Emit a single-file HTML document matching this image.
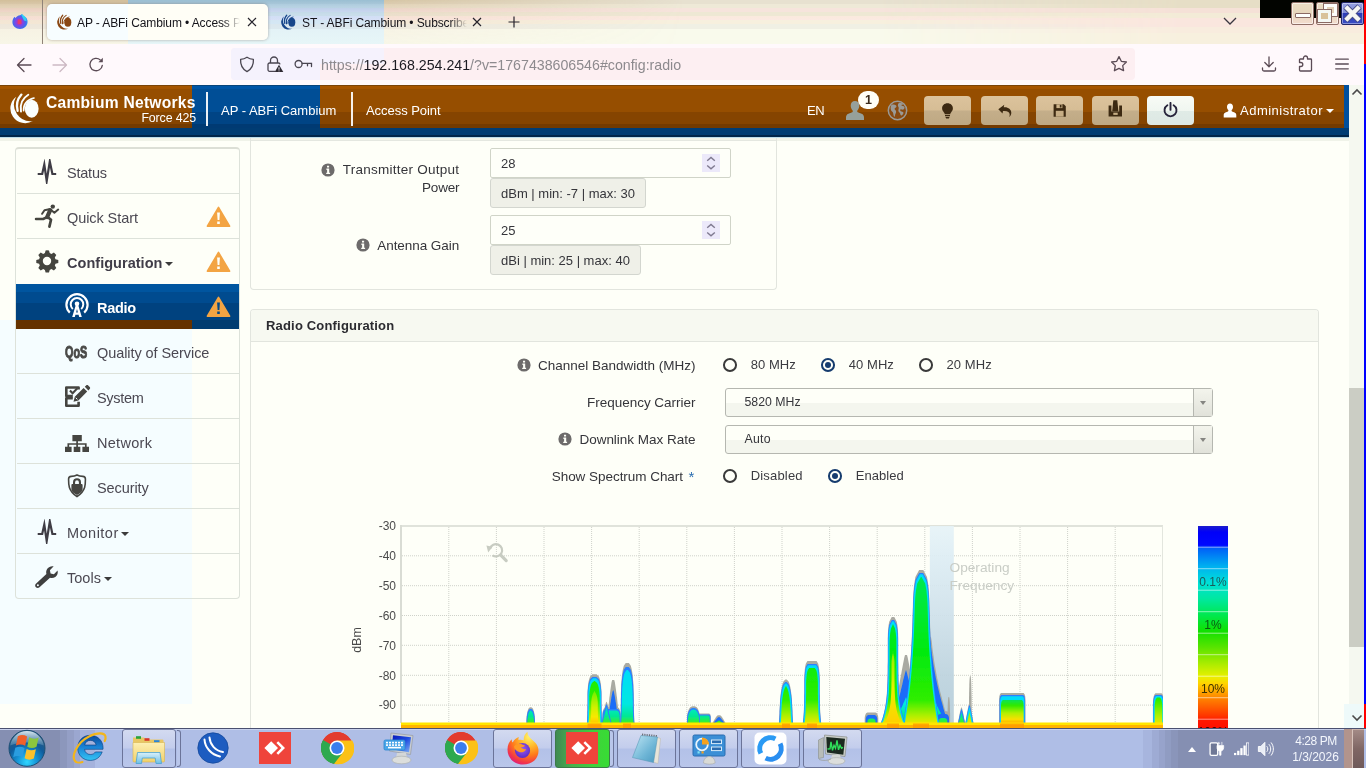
<!DOCTYPE html>
<html lang="en">
<head>
<meta charset="utf-8">
<title>AP - ABFi Cambium • Access Point</title>
<style>
*{box-sizing:border-box;margin:0;padding:0}
html,body{width:1366px;height:768px;overflow:hidden}
body{position:relative;background:#fefff8;font-family:"Liberation Sans",sans-serif;font-size:14px;color:#3b3b3b}
.abs{position:absolute}
.nw{white-space:nowrap}
/* ---------- browser chrome ---------- */
#tabbar{position:absolute;left:0;top:0;width:1366px;height:44px;background:linear-gradient(to bottom,#e7e1d0 0,#e7e1d0 4px,#eee9d7 4px,#eee9d7 8px,#f6e4dc 8px,#f6e4dc 12px,#eee8d4 12px,#eee8d4 16px,#faeadd 16px,#fbe9e2 20px,#f7f0de 20px,#f7f0de 24px,#f0f0e4 24px,#f0f0e4 29px,#f9faec 29px,#f9faec 44px)}
#tabbarL{position:absolute;left:0;top:0;width:128px;height:44px;background:linear-gradient(to bottom,rgba(185,150,90,.46) 0,rgba(195,150,100,.3) 6px,rgba(215,160,140,.16) 14px,rgba(225,170,150,.1) 28px,rgba(225,180,150,.06) 44px)}
#tabbarB{position:absolute;left:128px;top:0;width:256px;height:44px;background:linear-gradient(to bottom,rgba(90,150,185,.46) 0,rgba(100,150,195,.3) 6px,rgba(140,160,215,.16) 14px,rgba(150,170,225,.1) 28px,rgba(150,180,225,.06) 44px),linear-gradient(to bottom,#d0e1e7 0,#d0e1e7 4px,#d7e9ee 4px,#d7e9ee 8px,#dce4f6 8px,#dce4f6 12px,#d4e8ee 12px,#d4e8ee 16px,#ddeafa 16px,#e2e9fb 20px,#def0f7 20px,#def0f7 24px,#e4f0f0 24px,#e4f0f0 29px,#ecfaf9 29px,#ecfaf9 44px)}
#tabbarR{position:absolute;left:384px;top:0;width:300px;height:44px;background:linear-gradient(to bottom,rgba(185,150,90,.46) 0,rgba(195,150,100,.3) 6px,rgba(215,160,140,.16) 14px,rgba(225,170,150,.1) 28px,rgba(225,180,150,.06) 44px);-webkit-mask-image:linear-gradient(to right,rgba(0,0,0,.8),transparent);mask-image:linear-gradient(to right,rgba(0,0,0,.8),transparent)}
#tabbarRR{position:absolute;left:880px;top:0;width:486px;height:44px;background:linear-gradient(to bottom,#e6dec6 0,#e6dec6 8px,#f5e1d7 8px,#f5e1d7 13px,#f3ebd7 13px,#f3ebd7 18px,#fae6de 18px,#fae6de 27px,#f8ecde 27px,#f8ecde 33px,#f7f0de 33px,#f7f0de 44px);-webkit-mask-image:linear-gradient(to right,transparent 0,#000 300px);mask-image:linear-gradient(to right,transparent 0,#000 300px)}
#toolbar{position:absolute;left:0;top:44px;width:1366px;height:41px;background:#fff9fc}
#urlbar{position:absolute;left:231px;top:48px;width:904px;height:32px;border-radius:4px;background:#fdeff2;overflow:hidden}
.tab{position:absolute;top:4px;height:36px;border-radius:5px}
.tabtxt{position:absolute;top:5px;height:36px;line-height:36px;font-size:12px;color:#15141a;white-space:nowrap;overflow:hidden}
/* ---------- cambium header ---------- */
#hdr{position:absolute;left:0;top:85px;width:1349px;height:43px;background:linear-gradient(to bottom,#7a4408 0,#7a4408 1px,#a85700 1px,#a35400 4px,#964e00 4px,#964e00 27px,#854400 27px,#854400 39px,#733a00 39px,#733a00 43px);color:#fff}
#hdrB{position:absolute;left:192px;top:85px;width:128px;height:43px;background:linear-gradient(to bottom,#08447a 0,#08447a 1px,#0057a8 1px,#0054a3 4px,#004e96 4px,#004e96 27px,#004485 27px,#004485 39px,#003a73 39px,#003a73 43px)}
#hdrR{position:absolute;left:1344px;top:85px;width:5px;height:43px;background:#004f9c}
#stripe{position:absolute;left:0;top:128px;width:1349px;height:8.500px;background:linear-gradient(to bottom,#003c73 0,#003c73 7.500px,#00254a 7.500px,#00254a 8.500px)}
#stripeSh{position:absolute;left:0;top:136.500px;width:1349px;height:4px;background:linear-gradient(to bottom,#bcdcea 0,#bcdcea 1px,#f0f3e9 1px,#f0f3e9 4px)}
.hbtn{position:absolute;top:96px;width:47px;height:28.500px;border-radius:4px;background:linear-gradient(to bottom,#dcc39c 0,#d6bd95 48%,#c4ae8a 52%,#bea883 100%)}
/* ---------- sidebar ---------- */
#tintL{position:absolute;left:0;top:320px;width:192px;height:384px;background:#f5fdff}
#side{position:absolute;left:15px;top:147px;width:225px;height:452px;border:1px solid #dde2da;border-top:2px solid #dcdfd6;border-radius:4px}
.mi{position:absolute;left:0;width:222px;height:45px;border-top:1px solid #dde2da;line-height:44px;font-size:15px;color:#454545;white-space:nowrap}
.mi span{position:absolute;top:0}
/* ---------- panels ---------- */
.panel{position:absolute;border:1px solid #e2e5de;border-radius:3px}
.lbl{position:absolute;text-align:right;white-space:nowrap;font-size:13.500px;color:#35353a;line-height:18px}
.inp{position:absolute;left:490px;width:241px;height:30px;border:1px solid #d0d4c8;border-radius:2px;background:#fefff9}
.inp span{position:absolute;left:10px;top:1px;line-height:28px;font-size:13px;color:#35353a}
.hint{position:absolute;left:490px;height:30px;border:1px solid #d3d6cf;border-radius:3px;background:#eff0e8;font-size:13px;line-height:30px;color:#35353a;padding:0 0 0 10px;white-space:nowrap}
.sel{position:absolute;left:725px;width:488px;height:29.400px;border:1px solid #b5b7b0;border-radius:3px;background:linear-gradient(to bottom,#fefff8 0,#fefff8 50%,#f4f6ee 51%,#f4f6ee 100%)}
.sel span{position:absolute;left:18.500px;top:0;line-height:26px;font-size:12.300px;color:#35353a}
.sel i{position:absolute;right:0;top:0;width:19px;height:27px;border-left:1px solid #b5b7b0;background:linear-gradient(to bottom,#f3f4ec 0,#e1e2da 100%)}
.rad{position:absolute;width:14.400px;height:14px;border-radius:50%;border:2px solid #3a3a3a;background:#fefff8}
.rad.on{border-color:#163c6e}
.rad.on:after{content:"";position:absolute;left:1.900px;top:1.700px;width:6.600px;height:6.600px;border-radius:50%;background:#163c6e}
.rl{position:absolute;font-size:13px;line-height:18px;color:#3b3b40;white-space:nowrap}
/* ---------- taskbar ---------- */
#task{position:absolute;left:0;top:728px;width:1366px;height:40px;background:#afbee6;border-top:1px solid #4a5070}
.tbtn{position:absolute;top:729px;width:59px;height:39px;border:1px solid #6b7499;border-radius:3px;background:linear-gradient(to bottom,#d3daf0 0,#c3cdec 48%,#b3c1e8 52%,#b9c6ea 100%)}
</style>
</head>
<body>
<div id="wrap" style="position:absolute;left:0;top:0;width:1366px;height:768px;will-change:transform">
<!-- TABBAR -->
<div id="tabbar"></div><div id="tabbarL"></div><div id="tabbarB"></div><div id="tabbarR"></div><div id="tabbarRR"></div>
<!-- firefox view icon -->
<svg class="abs" style="left:11px;top:13px" width="18" height="18" viewBox="0 0 18 18"><defs><radialGradient id="ffv" cx="45%" cy="55%" r="60%"><stop offset="0" stop-color="#e0307a"/><stop offset=".35" stop-color="#8a40e0"/><stop offset=".75" stop-color="#3a6cf0"/><stop offset="1" stop-color="#35b0f5"/></radialGradient></defs><path d="M9 2.2c1-.2 1.600-1.400 2.400-1.200 0 1.200.8 1.800 1.800 2.200 2.200 1 3.600 3.200 3.400 5.800-.2 3.900-3.500 7-7.600 7S1.400 12.900 1.400 9c0-2.200.9-4 2.300-5.200.2.700.5 1 1 1.300.6-1.700 2.300-2.700 4.300-2.900z" fill="url(#ffv)"/><path d="M10 1.200c1.800.4 3.200 1.200 4.200 2.600 1 1.300 1.500 2.900 1.300 4.400l-2.500-.7-1.500-3z" fill="#2fd8f4" opacity=".9"/><rect x="6.800" y="6.500" width="3.600" height="4.600" fill="#e83a6a" opacity=".9"/></svg>
<div class="abs" style="left:42px;top:0;width:1px;height:44px;background:#8f8378"></div>
<!-- active tab -->
<div class="tab" style="left:47px;width:221px;background:linear-gradient(to right,#f7fdff 0,#f7fdff 81px,#fffef6 81px,#fffef6 100%);box-shadow:0 0 3px rgba(90,70,60,.45)"></div>
<svg class="abs" style="left:55.5px;top:13.5px" width="17" height="17" viewBox="0 0 34 34"><path d="M8.100 4.700A14.800 14.800 0 0 0 24.840 29.050A16.500 16.500 0 0 1 8.100 4.700z" fill="#8a4713"/><g fill="none" stroke="#8a4713" stroke-linecap="round"><path d="M13.400 2.600Q7.200 9.500 9.600 18.800" stroke-width="2.600"/><path d="M20.300 2.800Q11 8.500 13 19.600" stroke-width="2.200"/><path d="M26 6Q15 8.800 15.600 18.800" stroke-width="1.800"/></g><ellipse cx="23.700" cy="16.700" rx="6.900" ry="9" fill="#8a4713"/></svg>
<div class="tabtxt" style="left:77px;width:164px;letter-spacing:-.1px;-webkit-mask-image:linear-gradient(to right,#000 146px,transparent 163px);mask-image:linear-gradient(to right,#000 146px,transparent 163px)">AP - ABFi Cambium • Access Point</div>
<svg class="abs" style="left:247px;top:17px" width="10" height="10" viewBox="0 0 10 10"><path d="M1 1l8 8M9 1l-8 8" stroke="#26242c" stroke-width="1.200" fill="none"/></svg>
<!-- second tab -->
<svg class="abs" style="left:279.5px;top:13.5px" width="17" height="17" viewBox="0 0 34 34"><path d="M8.100 4.700A14.800 14.800 0 0 0 24.840 29.050A16.500 16.500 0 0 1 8.100 4.700z" fill="#17468a"/><g fill="none" stroke="#17468a" stroke-linecap="round"><path d="M13.400 2.600Q7.200 9.500 9.600 18.800" stroke-width="2.600"/><path d="M20.300 2.800Q11 8.500 13 19.600" stroke-width="2.200"/><path d="M26 6Q15 8.800 15.600 18.800" stroke-width="1.800"/></g><ellipse cx="23.700" cy="16.700" rx="6.900" ry="9" fill="#17468a"/></svg>
<div class="tabtxt" style="left:302px;width:166px;letter-spacing:-.1px;-webkit-mask-image:linear-gradient(to right,#000 148px,transparent 165px);mask-image:linear-gradient(to right,#000 148px,transparent 165px)">ST - ABFi Cambium • Subscriber Module</div>
<svg class="abs" style="left:472px;top:17px" width="10" height="10" viewBox="0 0 10 10"><path d="M1 1l8 8M9 1l-8 8" stroke="#26242c" stroke-width="1.200" fill="none"/></svg>
<svg class="abs" style="left:508px;top:16px" width="12" height="12" viewBox="0 0 12 12"><path d="M6 .5v11M.5 6h11" stroke="#26242c" stroke-width="1.200" fill="none"/></svg>
<svg class="abs" style="left:1223px;top:17px" width="14" height="8" viewBox="0 0 14 8"><path d="M1 1l6 6 6-6" stroke="#3a3640" stroke-width="1.300" fill="none"/></svg>
<!-- window buttons -->
<div class="abs" style="left:1260px;top:0;width:104px;height:18px;background:#020400"></div>
<div class="abs" style="left:1291px;top:2px;width:23px;height:23px;border:1px solid #8f6e66;border-radius:2px;background:linear-gradient(to bottom,#eadcc4 0,#e6d6bc 50%,#f3dccf 100%);box-shadow:inset 0 0 0 1px rgba(255,255,255,.55)"><div class="abs" style="left:2.500px;top:9.700px;width:16px;height:5.600px;background:#fdfffd;border:1px solid #8a6a64;border-radius:1px"></div></div>
<div class="abs" style="left:1316px;top:2px;width:23px;height:23px;border:1px solid #8f6e66;border-radius:2px;background:linear-gradient(to bottom,#eadcc4 0,#e6d6bc 50%,#f3dccf 100%);box-shadow:inset 0 0 0 1px rgba(255,255,255,.55)"><div class="abs" style="left:7px;top:1px;width:13px;height:12px;border:3px solid #fdfdfb;outline:1px solid #8a6a64;background:#e4d2b8"></div><div class="abs" style="left:1px;top:7px;width:13px;height:12px;border:3px solid #f4f8f4;outline:1px solid #8a6a64;background:#d9c29a"></div></div>
<div class="abs" style="left:1341px;top:2px;width:23px;height:23px;border:1px solid #22266a;border-radius:2px;background:linear-gradient(to bottom,#939ee0 0,#8490dc 46%,#2c3cb8 50%,#3a4cc4 100%);box-shadow:inset 0 0 0 1px rgba(255,255,255,.4)"><svg class="abs" style="left:1px;top:1px" width="19" height="19" viewBox="0 0 19 19"><path d="M2.500 2.500l14 14M16.500 2.500l-14 14" stroke="#4a4f86" stroke-width="6.200" fill="none"/><path d="M2.800 2.800l13.400 13.400M16.200 2.800L2.800 16.200" stroke="#f6f6f4" stroke-width="4.400" fill="none"/></svg></div>
<!-- TOOLBAR -->
<div id="toolbar"></div>
<div id="urlbar"><div class="abs" style="left:0;top:0;width:153px;height:16px;background:#f5f2fd"></div><div class="abs" style="left:0;top:16px;width:89px;height:16px;background:#f5f2fd"></div></div>
<svg class="abs" style="left:16px;top:57px" width="16" height="16" viewBox="0 0 16 16"><path d="M15 8H1.800M8 1.500L1.500 8 8 14.500" stroke="#5b4b55" stroke-width="1.300" fill="none" stroke-linecap="round" stroke-linejoin="round"/></svg>
<svg class="abs" style="left:52px;top:57px" width="16" height="16" viewBox="0 0 16 16"><path d="M1 8h13.200M8 1.500L14.500 8 8 14.500" stroke="#cdb9c3" stroke-width="1.300" fill="none" stroke-linecap="round" stroke-linejoin="round"/></svg>
<svg class="abs" style="left:88px;top:56px" width="17" height="17" viewBox="0 0 17 17"><path d="M14.300 9.300a6.200 6.200 0 1 1-2-5.400" stroke="#5b4b55" stroke-width="1.300" fill="none" stroke-linecap="round"/><path d="M14.800 1.800v4.400h-4.400z" fill="#5b4b55"/></svg>
<svg class="abs" style="left:239px;top:56px" width="16" height="17" viewBox="0 0 16 17"><path d="M8 1.200C6 2.600 3.800 3.200 1.600 3.300c-.3 5 1.400 9.700 6.400 12.300 5-2.600 6.700-7.300 6.400-12.300C12.200 3.200 10 2.600 8 1.200z" stroke="#4a4651" stroke-width="1.300" fill="none" stroke-linejoin="round"/></svg>
<svg class="abs" style="left:266px;top:55px" width="18" height="18" viewBox="0 0 18 18"><path d="M4.500 8V5.500a3.500 3.500 0 0 1 7 0V8" stroke="#4a4651" stroke-width="1.300" fill="none"/><path d="M9 16.300H3.500a1.500 1.500 0 0 1-1.500-1.500V9.500A1.500 1.500 0 0 1 3.500 8h9a1.500 1.500 0 0 1 1.500 1.300" stroke="#4a4651" stroke-width="1.300" fill="none"/><path d="M13 9.800l4.300 7.200H8.700z" fill="#2e2b33"/><path d="M13 12.300v2.400M13 15.500v.8" stroke="#f5f2fd" stroke-width="1"/></svg>
<svg class="abs" style="left:294px;top:58px" width="19" height="12" viewBox="0 0 19 12"><circle cx="4.600" cy="6" r="3.500" stroke="#4a4651" stroke-width="1.300" fill="none"/><path d="M8.200 5.400h9.300v3.200M13.500 5.400v2.400" stroke="#4a4651" stroke-width="1.300" fill="none" stroke-linecap="round"/></svg>
<div class="abs nw" style="left:321px;top:49px;height:32px;line-height:33px;font-size:14.200px;color:#8d8a8e;letter-spacing:0">https://<span style="color:#1c1b22">192.168.254.241</span>/?v=1767438606546#config:radio</div>
<svg class="abs" style="left:1110px;top:55px" width="18" height="18" viewBox="0 0 18 18"><path d="M9 1.600l2.300 4.700 5.100.7-3.700 3.600.9 5.100L9 13.300l-4.600 2.400.9-5.100L1.600 7l5.100-.7z" stroke="#5b4b55" stroke-width="1.300" fill="none" stroke-linejoin="round"/></svg>
<svg class="abs" style="left:1261px;top:56px" width="16" height="16" viewBox="0 0 16 16"><path d="M8 1v9.500M3.800 6.500L8 10.700l4.200-4.200M1.500 12v1.500a1.500 1.500 0 0 0 1.500 1.500h10a1.500 1.500 0 0 0 1.500-1.500V12" stroke="#5b4b55" stroke-width="1.300" fill="none" stroke-linecap="round" stroke-linejoin="round"/></svg>
<svg class="abs" style="left:1298px;top:55px" width="16" height="17" viewBox="0 0 16 17"><path d="M5.500 4V3a2 2 0 0 1 4 0v1h3.200a.8.800 0 0 1 .8.800V15a1 1 0 0 1-1 1H2.500a1 1 0 0 1-1-1v-3.500h1.300a2 2 0 0 0 0-4H1.500V4.800a.8.800 0 0 1 .8-.8z" stroke="#5b4b55" stroke-width="1.300" fill="none" stroke-linejoin="round"/></svg>
<svg class="abs" style="left:1335px;top:58px" width="14" height="12" viewBox="0 0 14 12"><path d="M.7 1.200h12.600M.7 6h12.600M.7 10.800h12.600" stroke="#5b4b55" stroke-width="1.300" fill="none" stroke-linecap="round"/></svg>
<!-- HEADER -->
<div id="hdr"></div><div id="hdrB"></div><div id="hdrR"></div>
<div id="stripe"></div><div id="stripeSh"></div>
<svg class="abs" style="left:8px;top:92px" width="34" height="34" viewBox="0 0 34 34"><path d="M8.100 4.700A14.800 14.800 0 0 0 24.840 29.050A16.500 16.500 0 0 1 8.100 4.700z" fill="#fafffe"/><g fill="none" stroke="#fafffe" stroke-linecap="round"><path d="M13.400 2.600Q7.200 9.500 9.600 18.800" stroke-width="2.300"/><path d="M20.300 2.800Q11 8.500 13 19.600" stroke-width="1.900"/><path d="M26 6Q15 8.800 15.600 18.800" stroke-width="1.600"/></g><ellipse cx="23.700" cy="16.700" rx="6.900" ry="9" fill="#fafffe"/></svg>
<div class="abs nw" style="left:46px;top:92px;height:22px;line-height:22px;font-size:15.600px;font-weight:bold;color:#fff;letter-spacing:.26px">Cambium Networks</div>
<div class="abs nw" style="left:100px;width:96px;text-align:right;top:109px;height:18px;line-height:18px;font-size:12.400px;letter-spacing:-.13px;color:#fff">Force 425</div>
<div class="abs" style="left:206px;top:92px;width:2px;height:34px;background:#fff;opacity:.92"></div>
<div class="abs nw" style="left:221px;top:101px;height:20px;line-height:20px;font-size:13px;color:#fff">AP - ABFi Cambium</div>
<div class="abs" style="left:351px;top:92px;width:2px;height:34px;background:#fff;opacity:.92"></div>
<div class="abs nw" style="left:366px;top:101px;height:20px;line-height:20px;font-size:13px;letter-spacing:-.05px;color:#fff">Access Point</div>
<div class="abs nw" style="left:807px;top:101px;height:20px;line-height:20px;font-size:13px;letter-spacing:-.5px;color:#fff">EN</div>
<svg class="abs" style="left:845px;top:100px" width="20" height="21" viewBox="0 0 20 21"><path d="M10 1c2.700 0 4.300 2 4.300 4.800 0 1.800-.8 3.600-1.900 4.600-.3.300-.3 1.500.4 1.800l3.800 1.600c1.600.7 2.400 1.800 2.400 3.700V20H1v-2.500c0-1.900.8-3 2.400-3.700l3.800-1.600c.7-.3.700-1.500.4-1.800-1.100-1-1.900-2.800-1.900-4.600C5.700 3 7.300 1 10 1z" fill="#96a09b"/></svg>
<div class="abs" style="left:858px;top:91px;width:21px;height:18px;border-radius:9px;background:#fffef6"></div>
<div class="abs nw" style="left:858px;width:21px;text-align:center;top:91px;height:18px;line-height:18px;font-size:12.500px;font-weight:bold;color:#3a2a1a">1</div>
<svg class="abs" style="left:887px;top:100px" width="21" height="21" viewBox="0 0 21 21"><circle cx="10.500" cy="10.500" r="9.200" fill="#8a4a10" stroke="#9a9a96" stroke-width="1.500"/><path d="M4.500 4.800c1.800-.6 3.600-.4 4.600.6.800 1 .2 2-1 2.600-.8.500-.6 1.500.2 2 1.200.8 1 2.400.2 3.800-.5.900-.5 2.500-1.100 3.200-.8-.8-1-2.600-1.200-3.800-.2-1.400-1.600-1.800-2.200-3-.6-1.500-.4-4 .5-5.400zM12.400 2.800c1.400-.2 3 .4 4.200 1.400-.8.400-1.800.3-2.300 1 .8.700 2.500.5 3.100 1.500.5 1-.2 2.400-1.200 2.900-.9.400-1.700-.5-2.500-.3-.9.300-.6 1.600.1 2 .9.500 2.200.2 2.600 1.200.3.900-.6 2.200-1.600 2.900-.9.600-1.500-.6-1.600-1.600-.1-1.100-1.300-1.500-1.700-2.500-.4-1.200.4-2.300.2-3.500-.1-1-1-1.600-.8-2.700.1-1 .6-2 1.500-2.300z" fill="#9a9a96"/></svg>
<div class="hbtn" style="left:924px"></div>
<svg class="abs" style="left:941px;top:103px" width="13" height="16" viewBox="0 0 13 16"><path d="M6.500 .3C3.300 .3 1.100 2.500 1.100 5.300c0 1.700.8 2.800 1.700 3.900.6.700.9 1.300 1 2.100h5.400c.1-.8.400-1.400 1-2.100.9-1.100 1.700-2.200 1.700-3.900C11.900 2.500 9.700 .3 6.500 .3zM4 12.100h5v1.200H4zM4.400 13.900h4.200l-.8 1.500H5.200z" fill="#3d2a12"/></svg>
<div class="hbtn" style="left:981px"></div>
<svg class="abs" style="left:998px;top:104px" width="14" height="14" viewBox="0 0 14 14"><path d="M.3 5.200L6.300 .8l-.6 2.500c4.300-.5 7.600 2 7.600 5.500 0 1.800-.8 3.300-2.200 4.300.5-.9.600-1.700.6-2.500 0-2.500-2.500-4-6.700-3.500l-.5 2.300z" fill="#3d2a12"/></svg>
<div class="hbtn" style="left:1036px"></div>
<svg class="abs" style="left:1053px;top:104px" width="14" height="13" viewBox="0 0 14 13"><path d="M.6 .3h10.200l2 2v10.400H.6z" fill="#3d2a12"/><rect x="3.400" y=".3" width="6" height="3.800" fill="#cdb48a"/><rect x="6.800" y=".9" width="1.700" height="2.600" fill="#3d2a12"/><rect x="2.800" y="6.800" width="7.800" height="5.900" fill="#c7ae85"/></svg>
<div class="hbtn" style="left:1092px"></div>
<svg class="abs" style="left:1108px;top:100px" width="15" height="17" viewBox="0 0 15 17"><path d="M5.300 .3h4l1.100 11.200H4.200z" fill="#3d2a12"/><path d="M.6 5.600h2.800v5.900h7.800V5.600H14v11H.6z" fill="#3d2a12"/><path d="M5.300 12.700h4.400v2.200H5.300z" fill="#c7ae85"/></svg>
<div class="hbtn" style="left:1147px;background:linear-gradient(to bottom,#f8fbf6 0,#f0f6f0 50%,#e0ebe6 52%,#dde8e4 100%)"></div>
<svg class="abs" style="left:1162px;top:102px" width="17" height="16" viewBox="0 0 17 16"><path d="M5.400 3.200a6 6 0 1 0 6.200 0" stroke="#26233a" stroke-width="1.900" fill="none" stroke-linecap="round"/><path d="M8.500 .9v7" stroke="#26233a" stroke-width="1.900" stroke-linecap="round"/></svg>
<svg class="abs" style="left:1223px;top:103px" width="14" height="15" viewBox="0 0 14 15"><path d="M7 .5c1.900 0 3 1.400 3 3.400 0 1.300-.6 2.500-1.300 3.200-.2.200-.2 1 .3 1.300l2.600 1.100c1.100.5 1.700 1.300 1.700 2.600V14.500H.7v-2.400c0-1.300.6-2.100 1.700-2.600L5 8.400c.5-.3.500-1.100.3-1.300C4.600 6.400 4 5.200 4 3.900 4 1.900 5.100.5 7 .5z" fill="#fff"/></svg>
<div class="abs nw" style="left:1240px;top:101px;height:20px;line-height:20px;font-size:13px;letter-spacing:.49px;color:#fff">Administrator</div>
<div class="abs" style="left:1326px;top:109px;width:0;height:0;border-left:4px solid transparent;border-right:4px solid transparent;border-top:4px solid #fff"></div>
<!-- PAGE -->
<div id="tintL"></div>
<div id="side"></div>
<div class="abs" style="left:17px;top:193px;width:222px;height:1px;background:#dde2da"></div>
<div class="abs" style="left:17px;top:238px;width:222px;height:1px;background:#dde2da"></div>
<div class="abs" style="left:17px;top:373px;width:222px;height:1px;background:#dde2da"></div>
<div class="abs" style="left:17px;top:418px;width:222px;height:1px;background:#dde2da"></div>
<div class="abs" style="left:17px;top:463px;width:222px;height:1px;background:#dde2da"></div>
<div class="abs" style="left:17px;top:508px;width:222px;height:1px;background:#dde2da"></div>
<div class="abs" style="left:17px;top:553px;width:222px;height:1px;background:#dde2da"></div>
<svg class="abs" style="left:37px;top:159px" width="20" height="25" viewBox="0 0 20 25"><path d="M.7 15H5.200L7.300 5.500 9.700 22 12.800 2.500 15.400 15H19.200" stroke="#3f3d45" stroke-width="2.200" fill="none" stroke-linejoin="miter" stroke-miterlimit="10"/></svg>
<div class="abs nw" style="left:67px;top:162px;height:22px;line-height:22px;font-size:14.500px;letter-spacing:-0.22px;color:#4b4852">Status</div>
<svg class="abs" style="left:34px;top:203px" width="26" height="26" viewBox="0 0 26 26"><circle cx="18.800" cy="3.600" r="2.200" fill="#45453f"/><g stroke="#45453f" fill="none" stroke-linecap="round" stroke-linejoin="round"><path d="M16.200 7.200L13.200 14" stroke-width="4.200"/><path d="M16.800 6.800l3.600 3 3.800-3.200" stroke-width="2"/><path d="M15.200 6.200l-4.700 1-2.400 3.600" stroke-width="2"/><path d="M13 14.200l-3.800 1.800H2" stroke-width="2.500"/><path d="M13.600 14l3.400 2.800-1.600 6.800" stroke-width="2.700"/></g></svg>
<div class="abs nw" style="left:67px;top:207px;height:22px;line-height:22px;font-size:14.500px;letter-spacing:-0.08px;color:#4b4852">Quick Start</div>
<svg class="abs" style="left:206px;top:206px" width="25" height="22" viewBox="0 0 25 22"><path d="M12.500 1.400L23.600 20.200H1.400z" fill="#f3a443" stroke="#f3a443" stroke-width="1.600" stroke-linejoin="round"/><path d="M11.100 6.400h2.800l-.5 7.600h-1.800zM11.200 15.400h2.600v2.600h-2.600z" fill="#fefff8"/></svg>
<svg class="abs" style="left:35px;top:249px" width="24" height="24" viewBox="0 0 24 24"><path d="M12 1.200l2 .2.700 2.700 1.700.8 2.500-1.400 2.400 2.600-1.500 2.400.7 1.700 2.800.7v3.200l-2.800.7-.7 1.700 1.500 2.400-2.400 2.600-2.500-1.400-1.700.8-.7 2.700h-3.400l-.7-2.700-1.700-.8-2.500 1.400-2.400-2.600 1.500-2.400-.7-1.700-2.800-.7v-3.200l2.800-.7.700-1.700-1.500-2.400 2.400-2.600 2.500 1.400 1.700-.8.700-2.700zM12 7.800a4.200 4.200 0 1 0 0 8.400 4.200 4.200 0 0 0 0-8.400z" fill="#45453f" fill-rule="evenodd"/></svg>
<div class="abs nw" style="left:67px;top:252px;height:22px;line-height:22px;font-size:14.500px;letter-spacing:0.03px;font-weight:bold;color:#403d48">Configuration</div>
<div class="abs" style="left:165px;top:262px;width:0;height:0;border-left:4px solid transparent;border-right:4px solid transparent;border-top:4px solid #3b3b3b"></div>
<svg class="abs" style="left:206px;top:251px" width="25" height="22" viewBox="0 0 25 22"><path d="M12.500 1.400L23.600 20.200H1.400z" fill="#f3a443" stroke="#f3a443" stroke-width="1.600" stroke-linejoin="round"/><path d="M11.100 6.400h2.800l-.5 7.600h-1.800zM11.200 15.400h2.600v2.600h-2.600z" fill="#fefff8"/></svg>
<div class="abs" style="left:16px;top:284px;width:223px;height:37px;background:linear-gradient(to bottom,#00559f 0,#00559f 8px,#004b8f 8px,#004b8f 19px,#00427f 19px,#00427f 37px)"></div>
<div class="abs" style="left:16px;top:320px;width:176px;height:9px;background:#653200"></div>
<div class="abs" style="left:192px;top:320px;width:47px;height:9px;background:#003c70"></div>
<svg class="abs" style="left:64px;top:293px" width="26" height="25" viewBox="0 0 26 25"><g fill="none" stroke="#fff"><path d="M5.800 19.600A10.600 10.600 0 1 1 20.200 19.600" stroke-width="2.200"/><path d="M8.800 16A6.300 6.300 0 1 1 17.200 16" stroke-width="2"/></g><circle cx="13" cy="10.800" r="2.300" fill="#fff"/><path d="M11.800 12h2.400l3.600 12h-2.600l-.6-2.200h-3.200l-.6 2.200H8.200zM13 16l-.9 3.400h1.800z" fill="#fff" fill-rule="evenodd"/></svg>
<div class="abs nw" style="left:97px;top:297px;height:22px;line-height:22px;font-size:14.500px;letter-spacing:-0.28px;font-weight:bold;color:#fff">Radio</div>
<svg class="abs" style="left:206px;top:296px" width="25" height="22" viewBox="0 0 25 22"><path d="M12.500 1.400L23.600 20.200H1.400z" fill="#f3a443" stroke="#f3a443" stroke-width="1.600" stroke-linejoin="round"/><path d="M11.100 6.400h2.800l-.5 7.600h-1.800zM11.200 15.400h2.600v2.600h-2.600z" fill="#00488a"/></svg>
<div class="abs nw" style="left:65px;top:341px;height:22px;line-height:22px;font-size:16.500px;font-weight:bold;color:#4a4a48;letter-spacing:0;transform:scaleX(.655);transform-origin:0 50%;-webkit-text-stroke:1px #4a4a48">QoS</div>
<div class="abs nw" style="left:97px;top:342px;height:22px;line-height:22px;font-size:14.500px;letter-spacing:-0.07px;color:#4b4852">Quality of Service</div>
<svg class="abs" style="left:64px;top:385px" width="27" height="24" viewBox="0 0 27 24"><g fill="none" stroke="#454541" stroke-width="2.600" stroke-linejoin="round"><path d="M14.600 4.500V2.500H2.300v8.600h6.500"/><path d="M8.800 13.200H2.300v7.600h12.300v-4"/></g><path d="M5.200 6.200l1.500-1.400 1.900 1.900 4-4.200 1.500 1.400-5.500 5.800z" fill="#454541"/><path d="M20.800 1.800l3.600 3.600 1.300-1.300c.6-.6.600-1.500 0-2.100L24.200.5c-.6-.6-1.500-.6-2.100 0zM19.600 3L10.800 11.800l-1.300 4.900 4.900-1.300L23.200 6.600z" fill="#454541"/><path d="M11.800 12.800l1.600 1.600" stroke="#f5fdff" stroke-width="1"/></svg>
<div class="abs nw" style="left:97px;top:387px;height:22px;line-height:22px;font-size:14.500px;letter-spacing:-0.32px;color:#4b4852">System</div>
<svg class="abs" style="left:64px;top:434px" width="26" height="19" viewBox="0 0 26 19"><path d="M8.400 1h9.400v6.200H8.400zM1 12.800h6.600v5.200H1zM9.700 12.800h6.600v5.200H9.700zM18.400 12.800H25v5.200h-6.600z" fill="#454541"/><path d="M13.100 7v6M4.300 13v-3h17.500v3" stroke="#454541" stroke-width="1.700" fill="none"/></svg>
<div class="abs nw" style="left:97px;top:432px;height:22px;line-height:22px;font-size:14.500px;letter-spacing:0.29px;color:#4b4852">Network</div>
<svg class="abs" style="left:67px;top:474px" width="20" height="24" viewBox="0 0 20 24"><path d="M10 1c1.800.9 3.800 1.300 5.800 1.400 1.500.1 2.600 1.200 2.600 2.700 0 2.800.1 5.600-.8 8.300-1.200 3.700-3.800 6.700-7.600 9.100-3.800-2.400-6.400-5.400-7.600-9.100-.9-2.700-.8-5.500-.8-8.300 0-1.500 1.100-2.600 2.600-2.700C6.200 2.300 8.200 1.900 10 1z" fill="#f5fdff" stroke="#454541" stroke-width="1.600"/><path d="M6 10V8.200a4 4 0 0 1 8 0V10h.7c.5 0 .9.400.9.900v4.600c0 2.200-2.700 4-5.600 5.600-2.900-1.600-5.600-3.400-5.600-5.600v-4.600c0-.5.400-.9.900-.9zm2.100 0h3.800V8.200a1.900 1.900 0 0 0-3.800 0z" fill="#454541" fill-rule="evenodd"/></svg>
<div class="abs nw" style="left:97px;top:477px;height:22px;line-height:22px;font-size:14.500px;letter-spacing:-0.08px;color:#4b4852">Security</div>
<svg class="abs" style="left:37px;top:519px" width="20" height="25" viewBox="0 0 20 25"><path d="M.7 15H5.200L7.300 5.500 9.700 22 12.800 2.500 15.400 15H19.200" stroke="#3f3d45" stroke-width="2.200" fill="none" stroke-linejoin="miter" stroke-miterlimit="10"/></svg>
<div class="abs nw" style="left:67px;top:522px;height:22px;line-height:22px;font-size:14.500px;letter-spacing:0.48px;color:#4b4852">Monitor</div>
<div class="abs" style="left:121px;top:532px;width:0;height:0;border-left:4px solid transparent;border-right:4px solid transparent;border-top:4px solid #3b3b3b"></div>
<svg class="abs" style="left:34px;top:565px" width="25" height="24" viewBox="0 0 25 24"><path d="M23.600 5.500c.6 2.600-.3 5-2.300 6.400-1.600 1.100-3.500 1.300-5.300.8L5.500 22.300c-1 1-2.600 1-3.600 0s-1-2.600 0-3.600L12.400 9c-.5-1.800-.2-3.700.9-5.300C14.800 1.700 17.200.8 19.700 1.300l-3.800 3.900.7 3.300 3.300.7z" fill="#3f3f3f"/><circle cx="3.900" cy="20.300" r="1" fill="#f5fdff"/></svg>
<div class="abs nw" style="left:67px;top:567px;height:22px;line-height:22px;font-size:14.500px;letter-spacing:0.03px;color:#4b4852">Tools</div>
<div class="abs" style="left:104px;top:577px;width:0;height:0;border-left:4px solid transparent;border-right:4px solid transparent;border-top:4px solid #3b3b3b"></div>
<!-- PANELS -->
<div class="abs" style="left:250px;top:138px;width:527px;height:152px;border:1px solid #e2e5de;border-top:none;border-radius:0 0 4px 4px"></div>
<div class="abs" style="left:251px;top:140px;width:525px;height:1px;background:#e4e7e0"></div>
<svg class="abs" style="left:321px;top:162.500px" width="14" height="14" viewBox="0 0 14 14"><circle cx="7" cy="7" r="6.600" fill="#6d6b6b"/><path d="M5.400 5.600h2.800v4.200h.9v1.300H5.200V9.800h.9V6.900h-.7zM6 2.700h2.100v1.900H6z" fill="#fefff8"/></svg>
<div class="lbl" style="left:299.200px;width:160px;top:161px;letter-spacing:.25px">Transmitter Output</div><div class="lbl" style="left:299.200px;width:160px;top:179px;letter-spacing:-.24px">Power</div>
<div class="inp" style="top:148px"><span>28</span></div><div class="abs" style="left:702px;top:154px;width:18px;height:18px;background:#ece9fa"><svg class="abs" style="left:0;top:0" width="18" height="18" viewBox="0 0 18 18"><path d="M5.200 6.800L9 3.400l3.800 3.400M5.200 11.400L9 14.800l3.800-3.400" stroke="#7f7a90" stroke-width="1.400" fill="none"/></svg></div>
<div class="hint" style="top:178px;width:156px">dBm | min: -7 | max: 30</div>
<svg class="abs" style="left:356px;top:238px" width="14" height="14" viewBox="0 0 14 14"><circle cx="7" cy="7" r="6.600" fill="#6d6b6b"/><path d="M5.400 5.600h2.800v4.200h.9v1.300H5.200V9.800h.9V6.900h-.7zM6 2.700h2.100v1.900H6z" fill="#fefff8"/></svg>
<div class="lbl" style="left:299.200px;width:160px;top:237px;letter-spacing:-.05px">Antenna Gain</div>
<div class="inp" style="top:215px"><span>25</span></div><div class="abs" style="left:702px;top:221px;width:18px;height:18px;background:#ece9fa"><svg class="abs" style="left:0;top:0" width="18" height="18" viewBox="0 0 18 18"><path d="M5.200 6.800L9 3.400l3.800 3.400M5.200 11.400L9 14.800l3.800-3.400" stroke="#7f7a90" stroke-width="1.400" fill="none"/></svg></div>
<div class="hint" style="top:245px;width:151px">dBi | min: 25 | max: 40</div>
<!-- radio configuration panel -->
<div class="abs" style="left:250px;top:309px;width:1069px;height:460px;border:1px solid #e2e5de;border-radius:4px 4px 0 0;border-bottom:none"></div>
<div class="abs" style="left:251px;top:310px;width:1067px;height:32px;background:#f7f9f1;border-bottom:1px solid #e2e5de;border-radius:3px 3px 0 0"></div>
<div class="abs nw" style="left:266px;top:316px;height:20px;line-height:20px;font-size:13px;letter-spacing:.18px;font-weight:bold;color:#2b2b30">Radio Configuration</div>
<svg class="abs" style="left:517px;top:358px" width="14" height="14" viewBox="0 0 14 14"><circle cx="7" cy="7" r="6.600" fill="#6d6b6b"/><path d="M5.400 5.600h2.800v4.200h.9v1.300H5.200V9.800h.9V6.900h-.7zM6 2.700h2.100v1.900H6z" fill="#fefff8"/></svg>
<div class="lbl" style="left:500.600px;width:195px;top:357px">Channel Bandwidth (MHz)</div>
<div class="rad" style="left:723px;top:358px"></div><div class="rl" style="left:750.700px;top:356px;letter-spacing:.05px">80 MHz</div>
<div class="rad on" style="left:821px;top:358px"></div><div class="rl" style="left:848.800px;top:356px;letter-spacing:.05px">40 MHz</div>
<div class="rad" style="left:919px;top:358px"></div><div class="rl" style="left:946.600px;top:356px;letter-spacing:.05px">20 MHz</div>
<div class="lbl" style="left:500.400px;width:195px;top:394px;letter-spacing:-.03px">Frequency Carrier</div>
<div class="sel" style="top:387.600px"><span>5820 MHz</span><i></i></div>
<div class="abs" style="left:1200px;top:400.500px;width:0;height:0;border-left:3px solid transparent;border-right:3px solid transparent;border-top:4.500px solid #858581"></div>
<svg class="abs" style="left:558px;top:432px" width="14" height="14" viewBox="0 0 14 14"><circle cx="7" cy="7" r="6.600" fill="#6d6b6b"/><path d="M5.400 5.600h2.800v4.200h.9v1.300H5.200V9.800h.9V6.900h-.7zM6 2.700h2.100v1.900H6z" fill="#fefff8"/></svg>
<div class="lbl" style="left:500.400px;width:195px;top:431px;letter-spacing:-.02px">Downlink Max Rate</div>
<div class="sel" style="top:424.600px"><span style="letter-spacing:.25px">Auto</span><i></i></div>
<div class="abs" style="left:1200px;top:437.500px;width:0;height:0;border-left:3px solid transparent;border-right:3px solid transparent;border-top:4.500px solid #858581"></div>
<div class="lbl" style="left:488px;width:195px;top:468px;letter-spacing:-.04px">Show Spectrum Chart</div><div class="abs nw" style="left:688.500px;top:468px;line-height:18px;font-size:15px;color:#2a6db0">*</div>
<div class="rad" style="left:723px;top:469px"></div><div class="rl" style="left:750.700px;top:467px;letter-spacing:.18px">Disabled</div>
<div class="rad on" style="left:828px;top:469px"></div><div class="rl" style="left:855.800px;top:467px;letter-spacing:.03px">Enabled</div>
<!-- CHART -->
<svg class="abs" style="left:340px;top:510px" width="900" height="218" viewBox="340 510 900 218" font-family="'Liberation Sans',sans-serif">
<defs><linearGradient id="gG" gradientUnits="userSpaceOnUse" x1="0" y1="560" x2="0" y2="723"><stop offset="0" stop-color="#00e860"/><stop offset=".55" stop-color="#00ea10"/><stop offset=".86" stop-color="#30ee00"/><stop offset=".95" stop-color="#a8f000"/><stop offset="1" stop-color="#e8e800"/></linearGradient><linearGradient id="gY" gradientUnits="userSpaceOnUse" x1="0" y1="660" x2="0" y2="723"><stop offset="0" stop-color="#30ec00"/><stop offset=".5" stop-color="#70ee00"/><stop offset=".75" stop-color="#d0f000"/><stop offset=".9" stop-color="#f8e800"/><stop offset="1" stop-color="#ffc800"/></linearGradient><linearGradient id="gY2" gradientUnits="userSpaceOnUse" x1="0" y1="635" x2="0" y2="723"><stop offset="0" stop-color="#38ec00"/><stop offset=".3" stop-color="#a0f000"/><stop offset=".6" stop-color="#e8f000"/><stop offset="1" stop-color="#ffd000"/></linearGradient><linearGradient id="gP" gradientUnits="userSpaceOnUse" x1="0" y1="698" x2="0" y2="723"><stop offset="0" stop-color="#00e070"/><stop offset=".3" stop-color="#30ea00"/><stop offset=".6" stop-color="#b0f000"/><stop offset=".85" stop-color="#f8e000"/><stop offset="1" stop-color="#ffb000"/></linearGradient><linearGradient id="gC" gradientUnits="userSpaceOnUse" x1="0" y1="660" x2="0" y2="723"><stop offset="0" stop-color="#00d8ff"/><stop offset=".7" stop-color="#00e8e0"/><stop offset=".9" stop-color="#00e890"/><stop offset="1" stop-color="#40f020"/></linearGradient><linearGradient id="gOp" x1="0" y1="0" x2="0" y2="1"><stop offset="0" stop-color="#e6f3f7"/><stop offset=".18" stop-color="#dcecf3"/><stop offset=".45" stop-color="#cfe1ea"/><stop offset=".75" stop-color="#bdd3de"/><stop offset="1" stop-color="#b4ccd8"/></linearGradient><filter id="bl" x="340" y="510" width="900" height="218" filterUnits="userSpaceOnUse"><feGaussianBlur stdDeviation=".55"/></filter><clipPath id="cp"><rect x="401" y="526" width="762" height="198"/></clipPath></defs>
<path d="M402 555.8H1163" stroke="#cfd2ca" stroke-width="1" stroke-dasharray="1 1" fill="none"/><path d="M402 585.7H1163" stroke="#cfd2ca" stroke-width="1" stroke-dasharray="1 1" fill="none"/><path d="M402 615.5H1163" stroke="#cfd2ca" stroke-width="1" stroke-dasharray="1 1" fill="none"/><path d="M402 645.3H1163" stroke="#cfd2ca" stroke-width="1" stroke-dasharray="1 1" fill="none"/><path d="M402 675.3H1163" stroke="#cfd2ca" stroke-width="1" stroke-dasharray="1 1" fill="none"/><path d="M402 705.1H1163" stroke="#cfd2ca" stroke-width="1" stroke-dasharray="1 1" fill="none"/><path d="M448.8 527V723" stroke="#cfd2ca" stroke-width="1" stroke-dasharray="1 1" fill="none"/><path d="M496.4 527V723" stroke="#cfd2ca" stroke-width="1" stroke-dasharray="1 1" fill="none"/><path d="M544.0 527V723" stroke="#cfd2ca" stroke-width="1" stroke-dasharray="1 1" fill="none"/><path d="M591.6 527V723" stroke="#cfd2ca" stroke-width="1" stroke-dasharray="1 1" fill="none"/><path d="M639.2 527V723" stroke="#cfd2ca" stroke-width="1" stroke-dasharray="1 1" fill="none"/><path d="M686.8 527V723" stroke="#cfd2ca" stroke-width="1" stroke-dasharray="1 1" fill="none"/><path d="M734.4 527V723" stroke="#cfd2ca" stroke-width="1" stroke-dasharray="1 1" fill="none"/><path d="M782.0 527V723" stroke="#cfd2ca" stroke-width="1" stroke-dasharray="1 1" fill="none"/><path d="M829.6 527V723" stroke="#cfd2ca" stroke-width="1" stroke-dasharray="1 1" fill="none"/><path d="M877.2 527V723" stroke="#cfd2ca" stroke-width="1" stroke-dasharray="1 1" fill="none"/><path d="M924.8 527V723" stroke="#cfd2ca" stroke-width="1" stroke-dasharray="1 1" fill="none"/><path d="M972.4 527V723" stroke="#cfd2ca" stroke-width="1" stroke-dasharray="1 1" fill="none"/><path d="M1020.0 527V723" stroke="#cfd2ca" stroke-width="1" stroke-dasharray="1 1" fill="none"/><path d="M1067.6 527V723" stroke="#cfd2ca" stroke-width="1" stroke-dasharray="1 1" fill="none"/><path d="M1115.2 527V723" stroke="#cfd2ca" stroke-width="1" stroke-dasharray="1 1" fill="none"/>
<path d="M401 526H1163" stroke="#e0e3db" stroke-width="2" fill="none"/><path d="M401 525V723" stroke="#d9dcd4" stroke-width="2" fill="none"/><path d="M1162.500 526V723" stroke="#e3e6de" stroke-width="1" fill="none"/>
<rect x="929.800" y="526" width="24" height="197" fill="url(#gOp)" opacity=".93"/>
<text x="949.500" y="571.500" font-size="13.700" fill="#c9cdc6">Operating</text><text x="949.500" y="589.500" font-size="13.700" fill="#c9cdc6">Frequency</text>
<g clip-path="url(#cp)">
<path d="M526.4 723.0 L526.4 722.3 L526.4 721.6 L526.4 720.9 L526.4 720.1 L526.4 719.4 L526.5 718.7 L526.5 718.0 L526.6 717.3 L526.6 716.6 L526.7 715.9 L526.8 715.2 L526.9 714.4 L527.0 713.7 L527.1 713.0 L527.3 712.3 L527.4 711.6 L527.6 710.9 L527.9 710.2 L528.1 709.5 L528.5 708.7 L528.9 708.0 L530.1 707.3 L531.3 707.3 L532.5 708.0 L532.9 708.7 L533.3 709.5 L533.5 710.2 L533.8 710.9 L534.0 711.6 L534.1 712.3 L534.3 713.0 L534.4 713.7 L534.5 714.4 L534.6 715.2 L534.7 715.9 L534.8 716.6 L534.8 717.3 L534.9 718.0 L534.9 718.7 L535.0 719.4 L535.0 720.1 L535.0 720.9 L535.0 721.6 L535.0 722.3 L535.0 723.0Z" fill="#a9aaa2"/>
<path d="M606.4 723.0 L606.6 721.0 L606.9 719.1 L607.1 717.1 L607.4 715.2 L607.6 713.2 L607.9 711.3 L608.1 709.4 L608.3 707.4 L608.6 705.5 L608.8 703.5 L609.0 701.5 L609.2 699.6 L609.4 697.6 L609.7 695.7 L609.9 693.8 L610.2 691.8 L610.4 689.9 L610.7 687.9 L611.0 686.0 L611.3 684.0 L611.6 682.0 L612.2 680.1 L614.2 680.1 L614.8 682.0 L615.1 684.0 L615.4 686.0 L615.7 687.9 L616.0 689.9 L616.2 691.8 L616.5 693.8 L616.7 695.7 L617.0 697.6 L617.2 699.6 L617.4 701.5 L617.6 703.5 L617.8 705.5 L618.1 707.4 L618.3 709.4 L618.5 711.3 L618.8 713.2 L619.0 715.2 L619.3 717.1 L619.5 719.1 L619.8 721.0 L620.0 723.0Z" fill="#a9aaa2"/>
<path d="M602.4 723.0 L602.4 722.3 L602.4 721.6 L602.4 720.9 L602.4 720.1 L602.4 719.4 L602.4 718.7 L602.4 718.0 L602.4 717.3 L602.4 716.6 L602.4 715.9 L602.4 715.2 L602.4 714.4 L602.5 713.7 L602.5 713.0 L602.6 712.3 L602.7 711.6 L602.9 710.9 L603.1 710.2 L603.3 709.5 L603.7 708.7 L604.2 708.0 L605.4 707.3 L617.6 707.3 L618.8 708.0 L619.3 708.7 L619.7 709.5 L619.9 710.2 L620.1 710.9 L620.3 711.6 L620.4 712.3 L620.5 713.0 L620.5 713.7 L620.6 714.4 L620.6 715.2 L620.6 715.9 L620.6 716.6 L620.6 717.3 L620.6 718.0 L620.6 718.7 L620.6 719.4 L620.6 720.1 L620.6 720.9 L620.6 721.6 L620.6 722.3 L620.6 723.0Z" fill="#a9aaa2"/>
<path d="M601.4 723.0 L601.6 722.0 L601.8 721.1 L602.0 720.1 L602.3 719.1 L602.5 718.2 L602.7 717.2 L602.9 716.2 L603.1 715.3 L603.3 714.3 L603.5 713.3 L603.7 712.4 L603.9 711.4 L604.0 710.4 L604.2 709.5 L604.5 708.5 L604.7 707.5 L604.9 706.6 L605.1 705.6 L605.3 704.6 L605.6 703.7 L605.9 702.7 L606.4 701.7 L606.6 701.7 L607.1 702.7 L607.4 703.7 L607.7 704.6 L607.9 705.6 L608.1 706.6 L608.3 707.5 L608.5 708.5 L608.8 709.5 L609.0 710.4 L609.1 711.4 L609.3 712.4 L609.5 713.3 L609.7 714.3 L609.9 715.3 L610.1 716.2 L610.3 717.2 L610.5 718.2 L610.7 719.1 L611.0 720.1 L611.2 721.1 L611.4 722.0 L611.6 723.0Z" fill="#a9aaa2"/>
<path d="M586.9 723.0 L587.0 720.8 L587.1 718.6 L587.2 716.4 L587.3 714.1 L587.3 711.9 L587.4 709.7 L587.4 707.5 L587.4 705.3 L587.5 703.1 L587.5 700.8 L587.5 698.6 L587.5 696.4 L587.5 694.2 L587.5 692.0 L587.6 689.8 L587.8 687.5 L588.0 685.3 L588.3 683.1 L588.7 680.9 L589.3 678.7 L590.1 676.5 L592.4 674.2 L596.6 674.2 L598.9 676.5 L599.7 678.7 L600.3 680.9 L600.7 683.1 L601.0 685.3 L601.2 687.5 L601.4 689.8 L601.5 692.0 L601.5 694.2 L601.5 696.4 L601.5 698.6 L601.5 700.8 L601.5 703.1 L601.6 705.3 L601.6 707.5 L601.6 709.7 L601.7 711.9 L601.7 714.1 L601.8 716.4 L601.9 718.6 L602.0 720.8 L602.1 723.0Z" fill="#a9aaa2"/>
<path d="M620.1 723.0 L620.3 720.3 L620.4 717.5 L620.5 714.8 L620.6 712.1 L620.7 709.4 L620.7 706.6 L620.8 703.9 L620.8 701.2 L620.8 698.5 L620.9 695.7 L620.9 693.0 L621.0 690.3 L621.1 687.5 L621.2 684.8 L621.3 682.1 L621.6 679.4 L621.8 676.6 L622.1 673.9 L622.5 671.2 L623.1 668.5 L623.8 665.7 L625.7 663.0 L628.9 663.0 L630.8 665.7 L631.5 668.5 L632.1 671.2 L632.5 673.9 L632.8 676.6 L633.0 679.4 L633.3 682.1 L633.4 684.8 L633.5 687.5 L633.6 690.3 L633.7 693.0 L633.7 695.7 L633.8 698.5 L633.8 701.2 L633.8 703.9 L633.9 706.6 L633.9 709.4 L634.0 712.1 L634.1 714.8 L634.2 717.5 L634.3 720.3 L634.5 723.0Z" fill="#a9aaa2"/>
<path d="M697.3 723.0 L697.3 722.6 L697.3 722.1 L697.3 721.7 L697.3 721.3 L697.3 720.8 L697.3 720.4 L697.3 720.0 L697.3 719.5 L697.3 719.1 L697.3 718.7 L697.3 718.2 L697.3 717.8 L697.3 717.4 L697.3 716.9 L697.3 716.5 L697.3 716.1 L697.4 715.6 L697.5 715.2 L697.6 714.8 L697.8 714.3 L698.1 713.9 L698.9 713.5 L709.1 713.5 L709.9 713.9 L710.2 714.3 L710.4 714.8 L710.5 715.2 L710.6 715.6 L710.7 716.1 L710.7 716.5 L710.7 716.9 L710.7 717.4 L710.7 717.8 L710.7 718.2 L710.7 718.7 L710.7 719.1 L710.7 719.5 L710.7 720.0 L710.7 720.4 L710.7 720.8 L710.7 721.3 L710.7 721.7 L710.7 722.1 L710.7 722.6 L710.7 723.0Z" fill="#a9aaa2"/>
<path d="M686.9 723.0 L686.9 722.2 L686.9 721.5 L686.9 720.7 L686.9 719.9 L686.9 719.2 L686.9 718.4 L687.0 717.7 L687.0 716.9 L687.1 716.1 L687.2 715.4 L687.3 714.6 L687.4 713.8 L687.6 713.1 L687.8 712.3 L688.0 711.5 L688.3 710.8 L688.6 710.0 L688.9 709.3 L689.3 708.5 L689.9 707.7 L690.6 707.0 L692.4 706.2 L694.6 706.2 L696.4 707.0 L697.1 707.7 L697.7 708.5 L698.1 709.3 L698.4 710.0 L698.7 710.8 L699.0 711.5 L699.2 712.3 L699.4 713.1 L699.6 713.8 L699.7 714.6 L699.8 715.4 L699.9 716.1 L700.0 716.9 L700.0 717.7 L700.1 718.4 L700.1 719.2 L700.1 719.9 L700.1 720.7 L700.1 721.5 L700.1 722.2 L700.1 723.0Z" fill="#a9aaa2"/>
<path d="M712.5 723.0 L712.7 722.6 L712.9 722.3 L713.1 721.9 L713.3 721.6 L713.5 721.2 L713.7 720.9 L713.9 720.5 L714.1 720.2 L714.3 719.8 L714.5 719.5 L714.8 719.1 L715.0 718.7 L715.2 718.4 L715.4 718.0 L715.6 717.7 L715.9 717.3 L716.1 717.0 L716.4 716.6 L716.7 716.3 L717.0 715.9 L717.4 715.6 L718.0 715.2 L720.0 715.2 L720.6 715.6 L721.0 715.9 L721.3 716.3 L721.6 716.6 L721.9 717.0 L722.1 717.3 L722.4 717.7 L722.6 718.0 L722.8 718.4 L723.0 718.7 L723.2 719.1 L723.5 719.5 L723.7 719.8 L723.9 720.2 L724.1 720.5 L724.3 720.9 L724.5 721.2 L724.7 721.6 L724.9 721.9 L725.1 722.3 L725.3 722.6 L725.5 723.0Z" fill="#a9aaa2"/>
<path d="M778.9 723.0 L779.1 721.0 L779.2 719.0 L779.3 717.1 L779.4 715.1 L779.5 713.1 L779.5 711.1 L779.6 709.2 L779.7 707.2 L779.8 705.2 L779.9 703.2 L780.0 701.3 L780.1 699.3 L780.3 697.3 L780.5 695.3 L780.7 693.4 L781.0 691.4 L781.3 689.4 L781.6 687.4 L782.1 685.5 L782.6 683.5 L783.4 681.5 L785.3 679.5 L786.7 679.5 L788.6 681.5 L789.4 683.5 L789.9 685.5 L790.4 687.4 L790.7 689.4 L791.0 691.4 L791.3 693.4 L791.5 695.3 L791.7 697.3 L791.9 699.3 L792.0 701.3 L792.1 703.2 L792.2 705.2 L792.3 707.2 L792.4 709.2 L792.5 711.1 L792.5 713.1 L792.6 715.1 L792.7 717.1 L792.8 719.0 L792.9 721.0 L793.1 723.0Z" fill="#a9aaa2"/>
<path d="M802.8 723.0 L803.1 720.2 L803.4 717.4 L803.6 714.5 L803.8 711.7 L803.9 708.9 L804.0 706.1 L804.1 703.3 L804.1 700.5 L804.2 697.6 L804.2 694.8 L804.3 692.0 L804.3 689.2 L804.3 686.4 L804.3 683.5 L804.3 680.7 L804.3 677.9 L804.4 675.1 L804.6 672.3 L804.8 669.5 L805.2 666.6 L805.8 663.8 L807.4 661.0 L816.6 661.0 L818.2 663.8 L818.8 666.6 L819.2 669.5 L819.4 672.3 L819.6 675.1 L819.7 677.9 L819.7 680.7 L819.7 683.5 L819.7 686.4 L819.7 689.2 L819.7 692.0 L819.8 694.8 L819.8 697.6 L819.9 700.5 L819.9 703.3 L820.0 706.1 L820.1 708.9 L820.2 711.7 L820.4 714.5 L820.6 717.4 L820.9 720.2 L821.2 723.0Z" fill="#a9aaa2"/>
<path d="M864.7 723.0 L864.7 722.5 L864.7 722.1 L864.7 721.6 L864.7 721.1 L864.7 720.6 L864.7 720.2 L864.7 719.7 L864.7 719.2 L864.7 718.7 L864.7 718.3 L864.7 717.8 L864.8 717.3 L864.8 716.9 L864.9 716.4 L865.0 715.9 L865.2 715.4 L865.3 715.0 L865.5 714.5 L865.7 714.0 L866.0 713.5 L866.4 713.1 L867.5 712.6 L875.5 712.6 L876.6 713.1 L877.0 713.5 L877.3 714.0 L877.5 714.5 L877.7 715.0 L877.8 715.4 L878.0 715.9 L878.1 716.4 L878.2 716.9 L878.2 717.3 L878.3 717.8 L878.3 718.3 L878.3 718.7 L878.3 719.2 L878.3 719.7 L878.3 720.2 L878.3 720.6 L878.3 721.1 L878.3 721.6 L878.3 722.1 L878.3 722.5 L878.3 723.0Z" fill="#a9aaa2"/>
<path d="M891.0 723.0 L891.7 719.9 L892.4 716.8 L893.1 713.7 L893.8 710.6 L894.5 707.5 L895.1 704.5 L895.8 701.4 L896.4 698.3 L897.1 695.2 L897.7 692.1 L898.3 689.0 L899.0 685.9 L899.6 682.8 L900.1 679.7 L900.7 676.6 L901.3 673.5 L901.8 670.5 L902.4 667.4 L903.0 664.3 L903.6 661.2 L904.2 658.1 L905.0 655.0 L907.0 655.0 L907.8 658.1 L908.4 661.2 L909.0 664.3 L909.6 667.4 L910.2 670.5 L910.7 673.5 L911.3 676.6 L911.9 679.7 L912.4 682.8 L913.0 685.9 L913.7 689.0 L914.3 692.1 L914.9 695.2 L915.6 698.3 L916.2 701.4 L916.9 704.5 L917.5 707.5 L918.2 710.6 L918.9 713.7 L919.6 716.8 L920.3 719.9 L921.0 723.0Z" fill="#a9aaa2"/>
<path d="M911.0 723.0 L912.2 719.1 L913.4 715.2 L914.6 711.3 L915.7 707.4 L916.7 703.5 L917.8 699.5 L918.8 695.6 L919.8 691.7 L920.7 687.8 L921.6 683.9 L922.4 680.0 L923.2 676.1 L923.9 672.2 L924.6 668.3 L925.3 664.4 L925.9 660.5 L926.4 656.5 L927.0 652.6 L927.5 648.7 L927.9 644.8 L928.3 640.9 L929.0 637.0 L931.0 637.0 L931.7 640.9 L932.1 644.8 L932.5 648.7 L933.0 652.6 L933.6 656.5 L934.1 660.5 L934.7 664.4 L935.4 668.3 L936.1 672.2 L936.8 676.1 L937.6 680.0 L938.4 683.9 L939.3 687.8 L940.2 691.7 L941.2 695.6 L942.2 699.5 L943.3 703.5 L944.3 707.4 L945.4 711.3 L946.6 715.2 L947.8 719.1 L949.0 723.0Z" fill="#a9aaa2"/>
<path d="M936.0 723.0 L936.0 722.5 L936.0 721.9 L936.0 721.4 L936.0 720.9 L936.0 720.3 L936.0 719.8 L936.0 719.3 L936.0 718.7 L936.0 718.2 L936.0 717.7 L936.0 717.1 L936.0 716.6 L936.1 716.1 L936.1 715.6 L936.2 715.0 L936.3 714.5 L936.5 714.0 L936.7 713.4 L936.9 712.9 L937.3 712.4 L937.8 711.8 L939.0 711.3 L947.0 711.3 L948.2 711.8 L948.7 712.4 L949.1 712.9 L949.3 713.4 L949.5 714.0 L949.7 714.5 L949.8 715.0 L949.9 715.6 L949.9 716.1 L950.0 716.6 L950.0 717.1 L950.0 717.7 L950.0 718.2 L950.0 718.7 L950.0 719.3 L950.0 719.8 L950.0 720.3 L950.0 720.9 L950.0 721.4 L950.0 721.9 L950.0 722.5 L950.0 723.0Z" fill="#a9aaa2"/>
<path d="M903.1 723.0 L904.2 716.0 L905.2 709.1 L906.2 702.1 L907.0 695.2 L907.9 688.2 L908.6 681.3 L909.3 674.3 L909.9 667.4 L910.4 660.4 L910.9 653.5 L911.3 646.5 L911.7 639.5 L912.0 632.6 L912.3 625.6 L912.5 618.7 L912.7 611.7 L912.9 604.8 L913.1 597.8 L913.5 590.9 L914.2 583.9 L915.4 577.0 L919.1 570.0 L923.3 570.0 L927.0 577.0 L928.2 583.9 L928.9 590.9 L929.3 597.8 L929.5 604.8 L929.7 611.7 L929.9 618.7 L930.1 625.6 L930.4 632.6 L930.7 639.5 L931.1 646.5 L931.5 653.5 L932.0 660.4 L932.5 667.4 L933.1 674.3 L933.8 681.3 L934.5 688.2 L935.4 695.2 L936.2 702.1 L937.2 709.1 L938.2 716.0 L939.3 723.0Z" fill="#a9aaa2"/>
<path d="M947.5 723.0 L947.5 721.8 L947.5 720.6 L947.5 719.5 L947.5 718.3 L947.5 717.1 L947.5 715.9 L947.5 714.7 L947.5 713.5 L947.6 712.4 L947.6 711.2 L947.6 710.0 L947.6 708.8 L947.7 707.6 L947.7 706.5 L947.7 705.3 L947.8 704.1 L947.8 702.9 L947.9 701.7 L948.0 700.5 L948.1 699.4 L948.2 698.2 L948.5 697.0 L949.1 697.0 L949.4 698.2 L949.5 699.4 L949.6 700.5 L949.7 701.7 L949.8 702.9 L949.8 704.1 L949.9 705.3 L949.9 706.5 L949.9 707.6 L950.0 708.8 L950.0 710.0 L950.0 711.2 L950.0 712.4 L950.1 713.5 L950.1 714.7 L950.1 715.9 L950.1 717.1 L950.1 718.3 L950.1 719.5 L950.1 720.6 L950.1 721.8 L950.1 723.0Z" fill="#a9aaa2"/>
<path d="M880.8 723.0 L882.5 718.2 L883.8 713.4 L884.9 708.5 L885.7 703.7 L886.3 698.9 L886.8 694.1 L887.1 689.3 L887.3 684.5 L887.5 679.6 L887.6 674.8 L887.7 670.0 L887.7 665.2 L887.8 660.4 L887.8 655.5 L887.8 650.7 L887.8 645.9 L887.8 641.1 L887.8 636.3 L888.0 631.5 L888.4 626.6 L889.2 621.8 L891.7 617.0 L894.3 617.0 L896.8 621.8 L897.6 626.6 L898.0 631.5 L898.2 636.3 L898.2 641.1 L898.2 645.9 L898.2 650.7 L898.2 655.5 L898.2 660.4 L898.3 665.2 L898.3 670.0 L898.4 674.8 L898.5 679.6 L898.7 684.5 L898.9 689.3 L899.2 694.1 L899.7 698.9 L900.3 703.7 L901.1 708.5 L902.2 713.4 L903.5 718.2 L905.2 723.0Z" fill="#a9aaa2"/>
<path d="M957.9 723.0 L958.0 722.3 L958.2 721.6 L958.3 720.9 L958.4 720.1 L958.6 719.4 L958.7 718.7 L958.9 718.0 L959.0 717.3 L959.1 716.6 L959.3 715.9 L959.4 715.2 L959.5 714.4 L959.7 713.7 L959.8 713.0 L960.0 712.3 L960.1 711.6 L960.3 710.9 L960.5 710.2 L960.6 709.5 L960.8 708.7 L961.1 708.0 L961.4 707.3 L961.6 707.3 L961.9 708.0 L962.2 708.7 L962.4 709.5 L962.5 710.2 L962.7 710.9 L962.9 711.6 L963.0 712.3 L963.2 713.0 L963.3 713.7 L963.5 714.4 L963.6 715.2 L963.7 715.9 L963.9 716.6 L964.0 717.3 L964.1 718.0 L964.3 718.7 L964.4 719.4 L964.6 720.1 L964.7 720.9 L964.8 721.6 L965.0 722.3 L965.1 723.0Z" fill="#a9aaa2"/>
<path d="M968.9 723.0 L968.9 720.9 L968.9 718.7 L968.9 716.6 L968.9 714.5 L968.9 712.3 L968.9 710.2 L968.9 708.0 L968.9 705.9 L969.0 703.8 L969.0 701.6 L969.0 699.5 L969.0 697.4 L969.1 695.2 L969.1 693.1 L969.2 691.0 L969.2 688.8 L969.3 686.7 L969.3 684.5 L969.4 682.4 L969.5 680.3 L969.7 678.1 L970.0 676.0 L970.6 676.0 L970.9 678.1 L971.1 680.3 L971.2 682.4 L971.3 684.5 L971.3 686.7 L971.4 688.8 L971.4 691.0 L971.5 693.1 L971.5 695.2 L971.6 697.4 L971.6 699.5 L971.6 701.6 L971.6 703.8 L971.7 705.9 L971.7 708.0 L971.7 710.2 L971.7 712.3 L971.7 714.5 L971.7 716.6 L971.7 718.7 L971.7 720.9 L971.7 723.0Z" fill="#a9aaa2"/>
<path d="M965.3 723.0 L965.5 722.1 L965.6 721.3 L965.8 720.4 L965.9 719.5 L966.1 718.7 L966.2 717.8 L966.4 716.9 L966.5 716.1 L966.7 715.2 L966.8 714.3 L967.0 713.5 L967.2 712.6 L967.3 711.7 L967.5 710.9 L967.7 710.0 L967.8 709.1 L968.0 708.3 L968.2 707.4 L968.4 706.5 L968.6 705.7 L968.9 704.8 L969.3 703.9 L969.5 703.9 L969.9 704.8 L970.2 705.7 L970.4 706.5 L970.6 707.4 L970.8 708.3 L971.0 709.1 L971.1 710.0 L971.3 710.9 L971.5 711.7 L971.6 712.6 L971.8 713.5 L972.0 714.3 L972.1 715.2 L972.3 716.1 L972.4 716.9 L972.6 717.8 L972.7 718.7 L972.9 719.5 L973.0 720.4 L973.2 721.3 L973.3 722.1 L973.5 723.0Z" fill="#a9aaa2"/>
<path d="M999.1 723.0 L999.1 721.6 L999.1 720.3 L999.1 718.9 L999.1 717.5 L999.1 716.2 L999.1 714.8 L999.1 713.5 L999.1 712.1 L999.1 710.7 L999.1 709.4 L999.1 708.0 L999.1 706.6 L999.1 705.3 L999.1 703.9 L999.1 702.5 L999.1 701.2 L999.1 699.8 L999.2 698.5 L999.3 697.1 L999.5 695.7 L999.9 694.4 L1000.9 693.0 L1023.7 693.0 L1024.7 694.4 L1025.1 695.7 L1025.3 697.1 L1025.4 698.5 L1025.5 699.8 L1025.5 701.2 L1025.5 702.5 L1025.5 703.9 L1025.5 705.3 L1025.5 706.6 L1025.5 708.0 L1025.5 709.4 L1025.5 710.7 L1025.5 712.1 L1025.5 713.5 L1025.5 714.8 L1025.5 716.2 L1025.5 717.5 L1025.5 718.9 L1025.5 720.3 L1025.5 721.6 L1025.5 723.0Z" fill="#a9aaa2"/>
<path d="M1152.9 723.0 L1152.9 721.7 L1152.9 720.3 L1152.9 719.0 L1152.9 717.6 L1152.9 716.3 L1152.9 714.9 L1152.9 713.6 L1152.9 712.2 L1152.9 710.9 L1152.9 709.5 L1152.9 708.2 L1152.9 706.8 L1152.9 705.5 L1152.9 704.1 L1153.0 702.8 L1153.0 701.4 L1153.1 700.1 L1153.3 698.7 L1153.5 697.4 L1153.8 696.0 L1154.2 694.7 L1155.4 693.3 L1161.6 693.3 L1162.8 694.7 L1163.2 696.0 L1163.5 697.4 L1163.7 698.7 L1163.9 700.1 L1164.0 701.4 L1164.0 702.8 L1164.1 704.1 L1164.1 705.5 L1164.1 706.8 L1164.1 708.2 L1164.1 709.5 L1164.1 710.9 L1164.1 712.2 L1164.1 713.6 L1164.1 714.9 L1164.1 716.3 L1164.1 717.6 L1164.1 719.0 L1164.1 720.3 L1164.1 721.7 L1164.1 723.0Z" fill="#a9aaa2"/>
<g filter="url(#bl)">
<path d="M526.5 723.0 L526.5 722.4 L526.5 721.7 L526.5 721.1 L526.5 720.5 L526.5 719.8 L526.6 719.2 L526.6 718.5 L526.7 717.9 L526.7 717.3 L526.8 716.6 L526.9 716.0 L527.0 715.4 L527.1 714.7 L527.2 714.1 L527.4 713.5 L527.5 712.8 L527.7 712.2 L528.0 711.5 L528.2 710.9 L528.6 710.3 L529.0 709.6 L530.2 709.0 L531.2 709.0 L532.4 709.6 L532.8 710.3 L533.2 710.9 L533.4 711.5 L533.7 712.2 L533.9 712.8 L534.0 713.5 L534.2 714.1 L534.3 714.7 L534.4 715.4 L534.5 716.0 L534.6 716.6 L534.7 717.3 L534.7 717.9 L534.8 718.5 L534.8 719.2 L534.9 719.8 L534.9 720.5 L534.9 721.1 L534.9 721.7 L534.9 722.4 L534.9 723.0Z" fill="#2a80ff"/>
<path d="M527.4 723.0 L527.4 722.4 L527.4 721.9 L527.4 721.3 L527.4 720.7 L527.4 720.1 L527.5 719.6 L527.5 719.0 L527.6 718.4 L527.6 717.8 L527.7 717.3 L527.8 716.7 L527.9 716.1 L528.0 715.6 L528.1 715.0 L528.3 714.4 L528.4 713.8 L528.6 713.3 L528.9 712.7 L529.1 712.1 L529.5 711.5 L529.9 711.0 L530.7 710.4 L530.7 710.4 L531.5 711.0 L531.9 711.5 L532.3 712.1 L532.5 712.7 L532.8 713.3 L533.0 713.8 L533.1 714.4 L533.3 715.0 L533.4 715.6 L533.5 716.1 L533.6 716.7 L533.7 717.3 L533.8 717.8 L533.8 718.4 L533.9 719.0 L533.9 719.6 L534.0 720.1 L534.0 720.7 L534.0 721.3 L534.0 721.9 L534.0 722.4 L534.0 723.0Z" fill="url(#gC)"/>
<path d="M607.4 723.0 L607.6 721.5 L607.9 720.0 L608.1 718.5 L608.4 717.0 L608.6 715.5 L608.9 714.0 L609.1 712.5 L609.3 711.0 L609.6 709.5 L609.8 708.0 L610.0 706.5 L610.2 705.0 L610.4 703.5 L610.7 702.0 L610.9 700.5 L611.2 699.0 L611.4 697.5 L611.7 696.0 L612.0 694.5 L612.3 693.0 L612.6 691.5 L613.2 690.0 L613.2 690.0 L613.8 691.5 L614.1 693.0 L614.4 694.5 L614.7 696.0 L615.0 697.5 L615.2 699.0 L615.5 700.5 L615.7 702.0 L616.0 703.5 L616.2 705.0 L616.4 706.5 L616.6 708.0 L616.8 709.5 L617.1 711.0 L617.3 712.5 L617.5 714.0 L617.8 715.5 L618.0 717.0 L618.3 718.5 L618.5 720.0 L618.8 721.5 L619.0 723.0Z" fill="#1a6cf8"/>
<path d="M609.2 723.0 L609.4 722.2 L609.7 721.4 L609.9 720.5 L610.2 719.7 L610.4 718.9 L610.7 718.0 L610.9 717.2 L611.1 716.4 L611.4 715.6 L611.6 714.8 L611.8 713.9 L612.0 713.1 L612.2 712.3 L612.5 711.5 L612.7 710.6 L613.0 709.8 L613.2 709.0 L613.2 708.1 L613.2 707.3 L613.2 706.5 L613.2 705.7 L613.2 704.9 L613.2 704.9 L613.2 705.7 L613.2 706.5 L613.2 707.3 L613.2 708.1 L613.2 709.0 L613.4 709.8 L613.7 710.6 L613.9 711.5 L614.2 712.3 L614.4 713.1 L614.6 713.9 L614.8 714.8 L615.0 715.6 L615.3 716.4 L615.5 717.2 L615.7 718.0 L616.0 718.9 L616.2 719.7 L616.5 720.5 L616.7 721.4 L617.0 722.2 L617.2 723.0Z" fill="url(#gC)"/>
<path d="M602.5 723.0 L602.5 722.4 L602.5 721.7 L602.5 721.1 L602.5 720.5 L602.5 719.8 L602.5 719.2 L602.5 718.5 L602.5 717.9 L602.5 717.3 L602.5 716.6 L602.5 716.0 L602.5 715.4 L602.6 714.7 L602.6 714.1 L602.7 713.5 L602.8 712.8 L603.0 712.2 L603.2 711.5 L603.4 710.9 L603.8 710.3 L604.3 709.6 L605.5 709.0 L617.5 709.0 L618.7 709.6 L619.2 710.3 L619.6 710.9 L619.8 711.5 L620.0 712.2 L620.2 712.8 L620.3 713.5 L620.4 714.1 L620.4 714.7 L620.5 715.4 L620.5 716.0 L620.5 716.6 L620.5 717.3 L620.5 717.9 L620.5 718.5 L620.5 719.2 L620.5 719.8 L620.5 720.5 L620.5 721.1 L620.5 721.7 L620.5 722.4 L620.5 723.0Z" fill="#2a80ff"/>
<path d="M603.4 723.0 L603.4 722.4 L603.4 721.9 L603.4 721.3 L603.4 720.7 L603.4 720.1 L603.4 719.6 L603.4 719.0 L603.4 718.4 L603.4 717.8 L603.4 717.3 L603.4 716.7 L603.4 716.1 L603.5 715.6 L603.5 715.0 L603.6 714.4 L603.7 713.8 L603.9 713.3 L604.1 712.7 L604.3 712.1 L604.7 711.5 L605.2 711.0 L606.4 710.4 L616.6 710.4 L617.8 711.0 L618.3 711.5 L618.7 712.1 L618.9 712.7 L619.1 713.3 L619.3 713.8 L619.4 714.4 L619.5 715.0 L619.5 715.6 L619.6 716.1 L619.6 716.7 L619.6 717.3 L619.6 717.8 L619.6 718.4 L619.6 719.0 L619.6 719.6 L619.6 720.1 L619.6 720.7 L619.6 721.3 L619.6 721.9 L619.6 722.4 L619.6 723.0Z" fill="url(#gC)"/>
<path d="M601.5 723.0 L601.7 722.1 L601.9 721.3 L602.1 720.4 L602.4 719.5 L602.6 718.7 L602.8 717.8 L603.0 717.0 L603.2 716.1 L603.4 715.2 L603.6 714.4 L603.8 713.5 L604.0 712.6 L604.1 711.8 L604.3 710.9 L604.6 710.0 L604.8 709.2 L605.0 708.3 L605.2 707.5 L605.4 706.6 L605.7 705.7 L606.0 704.9 L606.5 704.0 L606.5 704.0 L607.0 704.9 L607.3 705.7 L607.6 706.6 L607.8 707.5 L608.0 708.3 L608.2 709.2 L608.4 710.0 L608.7 710.9 L608.9 711.8 L609.0 712.6 L609.2 713.5 L609.4 714.4 L609.6 715.2 L609.8 716.1 L610.0 717.0 L610.2 717.8 L610.4 718.7 L610.6 719.5 L610.9 720.4 L611.1 721.3 L611.3 722.1 L611.5 723.0Z" fill="#2a80ff"/>
<path d="M602.4 723.0 L602.6 722.2 L602.8 721.4 L603.0 720.7 L603.3 719.9 L603.5 719.1 L603.7 718.3 L603.9 717.6 L604.1 716.8 L604.3 716.0 L604.5 715.2 L604.7 714.5 L604.9 713.7 L605.0 712.9 L605.2 712.1 L605.5 711.3 L605.7 710.6 L605.9 709.8 L606.1 709.0 L606.3 708.2 L606.5 707.5 L606.5 706.7 L606.5 705.9 L606.5 705.9 L606.5 706.7 L606.5 707.5 L606.7 708.2 L606.9 709.0 L607.1 709.8 L607.3 710.6 L607.5 711.3 L607.8 712.1 L608.0 712.9 L608.1 713.7 L608.3 714.5 L608.5 715.2 L608.7 716.0 L608.9 716.8 L609.1 717.6 L609.3 718.3 L609.5 719.1 L609.7 719.9 L610.0 720.7 L610.2 721.4 L610.4 722.2 L610.6 723.0Z" fill="url(#gC)"/>
<path d="M587.0 723.0 L587.1 720.9 L587.2 718.8 L587.3 716.7 L587.4 714.6 L587.4 712.5 L587.5 710.5 L587.5 708.4 L587.5 706.3 L587.6 704.2 L587.6 702.1 L587.6 700.0 L587.6 697.9 L587.6 695.8 L587.6 693.7 L587.7 691.6 L587.9 689.5 L588.1 687.5 L588.4 685.4 L588.8 683.3 L589.4 681.2 L590.2 679.1 L592.5 677.0 L596.5 677.0 L598.8 679.1 L599.6 681.2 L600.2 683.3 L600.6 685.4 L600.9 687.5 L601.1 689.5 L601.3 691.6 L601.4 693.7 L601.4 695.8 L601.4 697.9 L601.4 700.0 L601.4 702.1 L601.4 704.2 L601.5 706.3 L601.5 708.4 L601.5 710.5 L601.6 712.5 L601.6 714.6 L601.7 716.7 L601.8 718.8 L601.9 720.9 L602.0 723.0Z" fill="#2a80ff"/>
<path d="M587.5 723.0 L587.7 721.0 L587.8 718.9 L587.9 716.9 L587.9 714.9 L588.0 712.8 L588.0 710.8 L588.1 708.7 L588.1 706.7 L588.1 704.7 L588.1 702.6 L588.1 700.6 L588.1 698.6 L588.1 696.5 L588.2 694.5 L588.3 692.5 L588.4 690.4 L588.6 688.4 L588.9 686.3 L589.4 684.3 L589.9 682.3 L590.8 680.2 L593.0 678.2 L596.0 678.2 L598.2 680.2 L599.1 682.3 L599.6 684.3 L600.1 686.3 L600.4 688.4 L600.6 690.4 L600.7 692.5 L600.8 694.5 L600.9 696.5 L600.9 698.6 L600.9 700.6 L600.9 702.6 L600.9 704.7 L600.9 706.7 L600.9 708.7 L601.0 710.8 L601.0 712.8 L601.1 714.9 L601.1 716.9 L601.2 718.9 L601.3 721.0 L601.5 723.0Z" fill="#00dcf8"/>
<path d="M588.7 723.0 L588.8 721.1 L588.9 719.2 L589.0 717.3 L589.1 715.4 L589.1 713.5 L589.2 711.5 L589.2 709.6 L589.2 707.7 L589.3 705.8 L589.3 703.9 L589.3 702.0 L589.3 700.1 L589.3 698.2 L589.3 696.3 L589.4 694.4 L589.6 692.5 L589.8 690.5 L590.1 688.6 L590.5 686.7 L591.1 684.8 L591.9 682.9 L594.2 681.0 L594.8 681.0 L597.1 682.9 L597.9 684.8 L598.5 686.7 L598.9 688.6 L599.2 690.5 L599.4 692.5 L599.6 694.4 L599.7 696.3 L599.7 698.2 L599.7 700.1 L599.7 702.0 L599.7 703.9 L599.7 705.8 L599.8 707.7 L599.8 709.6 L599.8 711.5 L599.9 713.5 L599.9 715.4 L600.0 717.3 L600.1 719.2 L600.2 721.1 L600.3 723.0Z" fill="url(#gG)"/>
<path d="M590.6 723.0 L590.7 721.5 L590.8 720.1 L590.9 718.6 L591.0 717.1 L591.0 715.7 L591.1 714.2 L591.1 712.8 L591.1 711.3 L591.2 709.8 L591.2 708.4 L591.2 706.9 L591.2 705.4 L591.2 704.0 L591.2 702.5 L591.3 701.0 L591.5 699.6 L591.7 698.1 L592.0 696.7 L592.4 695.2 L593.0 693.7 L593.8 692.3 L594.5 690.8 L594.5 690.8 L595.2 692.3 L596.0 693.7 L596.6 695.2 L597.0 696.7 L597.3 698.1 L597.5 699.6 L597.7 701.0 L597.8 702.5 L597.8 704.0 L597.8 705.4 L597.8 706.9 L597.8 708.4 L597.8 709.8 L597.9 711.3 L597.9 712.8 L597.9 714.2 L598.0 715.7 L598.0 717.1 L598.1 718.6 L598.2 720.1 L598.3 721.5 L598.4 723.0Z" fill="url(#gY)"/>
<path d="M620.2 723.0 L620.4 720.5 L620.5 717.9 L620.6 715.4 L620.7 712.8 L620.8 710.3 L620.8 707.7 L620.9 705.2 L620.9 702.6 L620.9 700.1 L621.0 697.5 L621.0 695.0 L621.1 692.5 L621.2 689.9 L621.3 687.4 L621.4 684.8 L621.7 682.3 L621.9 679.7 L622.2 677.2 L622.6 674.6 L623.2 672.1 L623.9 669.5 L625.8 667.0 L628.8 667.0 L630.7 669.5 L631.4 672.1 L632.0 674.6 L632.4 677.2 L632.7 679.7 L632.9 682.3 L633.2 684.8 L633.3 687.4 L633.4 689.9 L633.5 692.5 L633.6 695.0 L633.6 697.5 L633.7 700.1 L633.7 702.6 L633.7 705.2 L633.8 707.7 L633.8 710.3 L633.9 712.8 L634.0 715.4 L634.1 717.9 L634.2 720.5 L634.4 723.0Z" fill="#2a80ff"/>
<path d="M621.1 723.0 L621.3 720.6 L621.4 718.2 L621.5 715.8 L621.6 713.4 L621.7 711.0 L621.7 708.5 L621.8 706.1 L621.8 703.7 L621.8 701.3 L621.9 698.9 L621.9 696.5 L622.0 694.1 L622.1 691.7 L622.2 689.3 L622.3 686.9 L622.6 684.5 L622.8 682.0 L623.1 679.6 L623.5 677.2 L624.1 674.8 L624.8 672.4 L626.7 670.0 L627.9 670.0 L629.8 672.4 L630.5 674.8 L631.1 677.2 L631.5 679.6 L631.8 682.0 L632.0 684.5 L632.3 686.9 L632.4 689.3 L632.5 691.7 L632.6 694.1 L632.7 696.5 L632.7 698.9 L632.8 701.3 L632.8 703.7 L632.8 706.1 L632.9 708.5 L632.9 711.0 L633.0 713.4 L633.1 715.8 L633.2 718.2 L633.3 720.6 L633.5 723.0Z" fill="url(#gC)"/>
<path d="M697.4 723.0 L697.4 722.6 L697.4 722.2 L697.4 721.8 L697.4 721.5 L697.4 721.1 L697.4 720.7 L697.4 720.3 L697.4 719.9 L697.4 719.5 L697.4 719.1 L697.4 718.8 L697.4 718.4 L697.4 718.0 L697.4 717.6 L697.4 717.2 L697.4 716.8 L697.5 716.4 L697.6 716.0 L697.7 715.7 L697.9 715.3 L698.2 714.9 L699.0 714.5 L709.0 714.5 L709.8 714.9 L710.1 715.3 L710.3 715.7 L710.4 716.0 L710.5 716.4 L710.6 716.8 L710.6 717.2 L710.6 717.6 L710.6 718.0 L710.6 718.4 L710.6 718.8 L710.6 719.1 L710.6 719.5 L710.6 719.9 L710.6 720.3 L710.6 720.7 L710.6 721.1 L710.6 721.5 L710.6 721.8 L710.6 722.2 L710.6 722.6 L710.6 723.0Z" fill="#2a80ff"/>
<path d="M698.3 723.0 L698.3 722.7 L698.3 722.3 L698.3 722.0 L698.3 721.6 L698.3 721.3 L698.3 720.9 L698.3 720.6 L698.3 720.2 L698.3 719.9 L698.3 719.5 L698.3 719.2 L698.3 718.8 L698.3 718.5 L698.3 718.1 L698.3 717.8 L698.3 717.4 L698.4 717.1 L698.5 716.7 L698.6 716.4 L698.8 716.0 L699.1 715.7 L699.9 715.4 L708.1 715.4 L708.9 715.7 L709.2 716.0 L709.4 716.4 L709.5 716.7 L709.6 717.1 L709.7 717.4 L709.7 717.8 L709.7 718.1 L709.7 718.5 L709.7 718.8 L709.7 719.2 L709.7 719.5 L709.7 719.9 L709.7 720.2 L709.7 720.6 L709.7 720.9 L709.7 721.3 L709.7 721.6 L709.7 722.0 L709.7 722.3 L709.7 722.7 L709.7 723.0Z" fill="url(#gC)"/>
<path d="M687.0 723.0 L687.0 722.3 L687.0 721.6 L687.0 721.0 L687.0 720.3 L687.0 719.6 L687.0 718.9 L687.1 718.2 L687.1 717.5 L687.2 716.9 L687.3 716.2 L687.4 715.5 L687.5 714.8 L687.7 714.1 L687.9 713.5 L688.1 712.8 L688.4 712.1 L688.7 711.4 L689.0 710.7 L689.4 710.0 L690.0 709.4 L690.7 708.7 L692.5 708.0 L694.5 708.0 L696.3 708.7 L697.0 709.4 L697.6 710.0 L698.0 710.7 L698.3 711.4 L698.6 712.1 L698.9 712.8 L699.1 713.5 L699.3 714.1 L699.5 714.8 L699.6 715.5 L699.7 716.2 L699.8 716.9 L699.9 717.5 L699.9 718.2 L700.0 718.9 L700.0 719.6 L700.0 720.3 L700.0 721.0 L700.0 721.6 L700.0 722.3 L700.0 723.0Z" fill="#2a80ff"/>
<path d="M687.9 723.0 L687.9 722.4 L687.9 721.8 L687.9 721.2 L687.9 720.5 L687.9 719.9 L687.9 719.3 L688.0 718.7 L688.0 718.1 L688.1 717.5 L688.2 716.9 L688.3 716.2 L688.4 715.6 L688.6 715.0 L688.8 714.4 L689.0 713.8 L689.3 713.2 L689.6 712.6 L689.9 712.0 L690.3 711.3 L690.9 710.7 L691.6 710.1 L693.4 709.5 L693.6 709.5 L695.4 710.1 L696.1 710.7 L696.7 711.3 L697.1 712.0 L697.4 712.6 L697.7 713.2 L698.0 713.8 L698.2 714.4 L698.4 715.0 L698.6 715.6 L698.7 716.2 L698.8 716.9 L698.9 717.5 L699.0 718.1 L699.0 718.7 L699.1 719.3 L699.1 719.9 L699.1 720.5 L699.1 721.2 L699.1 721.8 L699.1 722.4 L699.1 723.0Z" fill="url(#gC)"/>
<path d="M713.5 723.0 L713.7 722.7 L713.9 722.5 L714.1 722.2 L714.3 721.9 L714.5 721.6 L714.7 721.4 L714.9 721.1 L715.1 720.8 L715.3 720.5 L715.5 720.3 L715.8 720.0 L716.0 719.7 L716.2 719.5 L716.4 719.2 L716.6 718.9 L716.9 718.6 L717.1 718.4 L717.4 718.1 L717.7 717.8 L718.0 717.5 L718.4 717.3 L719.0 717.0 L719.0 717.0 L719.6 717.3 L720.0 717.5 L720.3 717.8 L720.6 718.1 L720.9 718.4 L721.1 718.6 L721.4 718.9 L721.6 719.2 L721.8 719.5 L722.0 719.7 L722.2 720.0 L722.5 720.3 L722.7 720.5 L722.9 720.8 L723.1 721.1 L723.3 721.4 L723.5 721.6 L723.7 721.9 L723.9 722.2 L724.1 722.5 L724.3 722.7 L724.5 723.0Z" fill="#1a6cf8"/>
<path d="M715.3 723.0 L715.5 722.9 L715.7 722.7 L715.9 722.5 L716.1 722.4 L716.3 722.2 L716.5 722.1 L716.7 722.0 L716.9 721.8 L717.1 721.6 L717.3 721.5 L717.5 721.4 L717.8 721.2 L718.0 721.1 L718.2 720.9 L718.4 720.8 L718.7 720.6 L718.9 720.5 L719.0 720.3 L719.0 720.1 L719.0 720.0 L719.0 719.9 L719.0 719.7 L719.0 719.7 L719.0 719.9 L719.0 720.0 L719.0 720.1 L719.0 720.3 L719.1 720.5 L719.3 720.6 L719.6 720.8 L719.8 720.9 L720.0 721.1 L720.2 721.2 L720.5 721.4 L720.7 721.5 L720.9 721.6 L721.1 721.8 L721.3 722.0 L721.5 722.1 L721.7 722.2 L721.9 722.4 L722.1 722.5 L722.3 722.7 L722.5 722.9 L722.7 723.0Z" fill="url(#gC)"/>
<path d="M779.0 723.0 L779.2 721.1 L779.3 719.3 L779.4 717.4 L779.5 715.5 L779.6 713.7 L779.6 711.8 L779.7 710.0 L779.8 708.1 L779.9 706.2 L780.0 704.4 L780.1 702.5 L780.2 700.6 L780.4 698.8 L780.6 696.9 L780.8 695.0 L781.1 693.2 L781.4 691.3 L781.7 689.5 L782.2 687.6 L782.7 685.7 L783.5 683.9 L785.4 682.0 L786.6 682.0 L788.5 683.9 L789.3 685.7 L789.8 687.6 L790.3 689.5 L790.6 691.3 L790.9 693.2 L791.2 695.0 L791.4 696.9 L791.6 698.8 L791.8 700.6 L791.9 702.5 L792.0 704.4 L792.1 706.2 L792.2 708.1 L792.3 710.0 L792.4 711.8 L792.4 713.7 L792.5 715.5 L792.6 717.4 L792.7 719.3 L792.8 721.1 L793.0 723.0Z" fill="#2a80ff"/>
<path d="M779.5 723.0 L779.7 721.2 L779.9 719.4 L780.0 717.6 L780.1 715.8 L780.1 714.0 L780.2 712.1 L780.3 710.3 L780.3 708.5 L780.4 706.7 L780.5 704.9 L780.6 703.1 L780.8 701.3 L781.0 699.5 L781.1 697.7 L781.4 695.9 L781.6 694.1 L781.9 692.2 L782.3 690.4 L782.7 688.6 L783.3 686.8 L784.0 685.0 L785.9 683.2 L786.1 683.2 L788.0 685.0 L788.7 686.8 L789.3 688.6 L789.7 690.4 L790.1 692.2 L790.4 694.1 L790.6 695.9 L790.9 697.7 L791.0 699.5 L791.2 701.3 L791.4 703.1 L791.5 704.9 L791.6 706.7 L791.7 708.5 L791.7 710.3 L791.8 712.1 L791.9 714.0 L791.9 715.8 L792.0 717.6 L792.1 719.4 L792.3 721.2 L792.5 723.0Z" fill="#00dcf8"/>
<path d="M780.7 723.0 L780.9 721.3 L781.0 719.6 L781.1 717.9 L781.2 716.2 L781.3 714.5 L781.3 712.8 L781.4 711.1 L781.5 709.4 L781.6 707.7 L781.7 706.0 L781.8 704.3 L781.9 702.6 L782.1 701.0 L782.3 699.3 L782.5 697.6 L782.8 695.9 L783.1 694.2 L783.4 692.5 L783.9 690.8 L784.4 689.1 L785.2 687.4 L786.0 685.7 L786.0 685.7 L786.8 687.4 L787.6 689.1 L788.1 690.8 L788.6 692.5 L788.9 694.2 L789.2 695.9 L789.5 697.6 L789.7 699.3 L789.9 701.0 L790.1 702.6 L790.2 704.3 L790.3 706.0 L790.4 707.7 L790.5 709.4 L790.6 711.1 L790.7 712.8 L790.7 714.5 L790.8 716.2 L790.9 717.9 L791.0 719.6 L791.1 721.3 L791.3 723.0Z" fill="url(#gG)"/>
<path d="M802.9 723.0 L803.2 720.3 L803.5 717.6 L803.7 715.0 L803.9 712.3 L804.0 709.6 L804.1 706.9 L804.2 704.2 L804.2 701.5 L804.3 698.9 L804.3 696.2 L804.4 693.5 L804.4 690.8 L804.4 688.1 L804.4 685.5 L804.4 682.8 L804.4 680.1 L804.5 677.4 L804.7 674.7 L804.9 672.0 L805.3 669.4 L805.9 666.7 L807.5 664.0 L816.5 664.0 L818.1 666.7 L818.7 669.4 L819.1 672.0 L819.3 674.7 L819.5 677.4 L819.6 680.1 L819.6 682.8 L819.6 685.5 L819.6 688.1 L819.6 690.8 L819.6 693.5 L819.7 696.2 L819.7 698.9 L819.8 701.5 L819.8 704.2 L819.9 706.9 L820.0 709.6 L820.1 712.3 L820.3 715.0 L820.5 717.6 L820.8 720.3 L821.1 723.0Z" fill="#2a80ff"/>
<path d="M803.4 723.0 L803.8 720.4 L804.0 717.7 L804.2 715.1 L804.4 712.5 L804.5 709.9 L804.6 707.2 L804.7 704.6 L804.8 702.0 L804.8 699.4 L804.9 696.7 L804.9 694.1 L804.9 691.5 L804.9 688.8 L804.9 686.2 L804.9 683.6 L805.0 681.0 L805.0 678.3 L805.2 675.7 L805.5 673.1 L805.8 670.5 L806.4 667.8 L808.0 665.2 L816.0 665.2 L817.6 667.8 L818.2 670.5 L818.5 673.1 L818.8 675.7 L819.0 678.3 L819.0 681.0 L819.1 683.6 L819.1 686.2 L819.1 688.8 L819.1 691.5 L819.1 694.1 L819.1 696.7 L819.2 699.4 L819.2 702.0 L819.3 704.6 L819.4 707.2 L819.5 709.9 L819.6 712.5 L819.8 715.1 L820.0 717.7 L820.2 720.4 L820.6 723.0Z" fill="#00dcf8"/>
<path d="M804.6 723.0 L804.9 720.5 L805.2 718.0 L805.4 715.5 L805.6 713.0 L805.7 710.5 L805.8 708.0 L805.9 705.5 L805.9 703.0 L806.0 700.5 L806.0 698.0 L806.1 695.5 L806.1 693.0 L806.1 690.5 L806.1 688.0 L806.1 685.5 L806.1 683.0 L806.2 680.5 L806.4 678.0 L806.6 675.5 L807.0 673.0 L807.6 670.5 L809.2 668.0 L814.8 668.0 L816.4 670.5 L817.0 673.0 L817.4 675.5 L817.6 678.0 L817.8 680.5 L817.9 683.0 L817.9 685.5 L817.9 688.0 L817.9 690.5 L817.9 693.0 L817.9 695.5 L818.0 698.0 L818.0 700.5 L818.1 703.0 L818.1 705.5 L818.2 708.0 L818.3 710.5 L818.4 713.0 L818.6 715.5 L818.8 718.0 L819.1 720.5 L819.4 723.0Z" fill="url(#gG)"/>
<path d="M865.7 723.0 L865.7 722.6 L865.7 722.3 L865.7 721.9 L865.7 721.5 L865.7 721.2 L865.7 720.8 L865.7 720.5 L865.7 720.1 L865.7 719.7 L865.7 719.4 L865.7 719.0 L865.8 718.6 L865.8 718.3 L865.9 717.9 L866.0 717.5 L866.2 717.2 L866.3 716.8 L866.5 716.5 L866.7 716.1 L867.0 715.7 L867.4 715.4 L868.5 715.0 L874.5 715.0 L875.6 715.4 L876.0 715.7 L876.3 716.1 L876.5 716.5 L876.7 716.8 L876.8 717.2 L877.0 717.5 L877.1 717.9 L877.2 718.3 L877.2 718.6 L877.3 719.0 L877.3 719.4 L877.3 719.7 L877.3 720.1 L877.3 720.5 L877.3 720.8 L877.3 721.2 L877.3 721.5 L877.3 721.9 L877.3 722.3 L877.3 722.6 L877.3 723.0Z" fill="#1a6cf8"/>
<path d="M867.5 723.0 L867.5 722.8 L867.5 722.6 L867.5 722.4 L867.5 722.2 L867.5 722.0 L867.5 721.8 L867.5 721.6 L867.5 721.4 L867.5 721.2 L867.5 721.0 L867.5 720.8 L867.6 720.6 L867.6 720.4 L867.7 720.2 L867.8 720.0 L868.0 719.8 L868.1 719.6 L868.3 719.4 L868.5 719.2 L868.8 719.0 L869.2 718.8 L870.3 718.6 L872.7 718.6 L873.8 718.8 L874.2 719.0 L874.5 719.2 L874.7 719.4 L874.9 719.6 L875.0 719.8 L875.2 720.0 L875.3 720.2 L875.4 720.4 L875.4 720.6 L875.5 720.8 L875.5 721.0 L875.5 721.2 L875.5 721.4 L875.5 721.6 L875.5 721.8 L875.5 722.0 L875.5 722.2 L875.5 722.4 L875.5 722.6 L875.5 722.8 L875.5 723.0Z" fill="url(#gC)"/>
<path d="M892.0 723.0 L892.7 720.6 L893.4 718.2 L894.1 715.8 L894.8 713.4 L895.5 711.0 L896.1 708.5 L896.8 706.1 L897.4 703.7 L898.1 701.3 L898.7 698.9 L899.3 696.5 L900.0 694.1 L900.6 691.7 L901.1 689.3 L901.7 686.9 L902.3 684.5 L902.8 682.0 L903.4 679.6 L904.0 677.2 L904.6 674.8 L905.2 672.4 L906.0 670.0 L906.0 670.0 L906.8 672.4 L907.4 674.8 L908.0 677.2 L908.6 679.6 L909.2 682.0 L909.7 684.5 L910.3 686.9 L910.9 689.3 L911.4 691.7 L912.0 694.1 L912.7 696.5 L913.3 698.9 L913.9 701.3 L914.6 703.7 L915.2 706.1 L915.9 708.5 L916.5 711.0 L917.2 713.4 L917.9 715.8 L918.6 718.2 L919.3 720.6 L920.0 723.0Z" fill="#1a6cf8"/>
<path d="M893.8 723.0 L894.5 721.7 L895.2 720.4 L895.9 719.0 L896.6 717.7 L897.3 716.4 L897.9 715.0 L898.6 713.7 L899.2 712.4 L899.9 711.1 L900.5 709.8 L901.1 708.4 L901.8 707.1 L902.4 705.8 L902.9 704.5 L903.5 703.1 L904.1 701.8 L904.6 700.5 L905.2 699.1 L905.8 697.8 L906.0 696.5 L906.0 695.2 L906.0 693.9 L906.0 693.9 L906.0 695.2 L906.0 696.5 L906.2 697.8 L906.8 699.1 L907.4 700.5 L907.9 701.8 L908.5 703.1 L909.1 704.5 L909.6 705.8 L910.2 707.1 L910.9 708.4 L911.5 709.8 L912.1 711.1 L912.8 712.4 L913.4 713.7 L914.1 715.0 L914.7 716.4 L915.4 717.7 L916.1 719.0 L916.8 720.4 L917.5 721.7 L918.2 723.0Z" fill="url(#gC)"/>
<path d="M912.0 723.0 L913.2 719.2 L914.4 715.5 L915.6 711.7 L916.7 707.9 L917.7 704.1 L918.8 700.4 L919.8 696.6 L920.8 692.8 L921.7 689.0 L922.6 685.3 L923.4 681.5 L924.2 677.7 L924.9 674.0 L925.6 670.2 L926.3 666.4 L926.9 662.6 L927.4 658.9 L928.0 655.1 L928.5 651.3 L928.9 647.5 L929.3 643.8 L930.0 640.0 L930.0 640.0 L930.7 643.8 L931.1 647.5 L931.5 651.3 L932.0 655.1 L932.6 658.9 L933.1 662.6 L933.7 666.4 L934.4 670.2 L935.1 674.0 L935.8 677.7 L936.6 681.5 L937.4 685.3 L938.3 689.0 L939.2 692.8 L940.2 696.6 L941.2 700.4 L942.3 704.1 L943.3 707.9 L944.4 711.7 L945.6 715.5 L946.8 719.2 L948.0 723.0Z" fill="#1a6cf8"/>
<path d="M913.8 723.0 L915.0 720.9 L916.2 718.9 L917.4 716.8 L918.5 714.7 L919.5 712.6 L920.6 710.5 L921.6 708.5 L922.6 706.4 L923.5 704.3 L924.4 702.2 L925.2 700.2 L926.0 698.1 L926.7 696.0 L927.4 693.9 L928.1 691.9 L928.7 689.8 L929.2 687.7 L929.8 685.6 L930.0 683.6 L930.0 681.5 L930.0 679.4 L930.0 677.4 L930.0 677.4 L930.0 679.4 L930.0 681.5 L930.0 683.6 L930.2 685.6 L930.8 687.7 L931.3 689.8 L931.9 691.9 L932.6 693.9 L933.3 696.0 L934.0 698.1 L934.8 700.2 L935.6 702.2 L936.5 704.3 L937.4 706.4 L938.4 708.5 L939.4 710.5 L940.5 712.6 L941.5 714.7 L942.6 716.8 L943.8 718.9 L945.0 720.9 L946.2 723.0Z" fill="url(#gC)"/>
<path d="M937.0 723.0 L937.0 722.6 L937.0 722.2 L937.0 721.8 L937.0 721.4 L937.0 721.0 L937.0 720.5 L937.0 720.1 L937.0 719.7 L937.0 719.3 L937.0 718.9 L937.0 718.5 L937.0 718.1 L937.1 717.7 L937.1 717.3 L937.2 716.9 L937.3 716.5 L937.5 716.0 L937.7 715.6 L937.9 715.2 L938.3 714.8 L938.8 714.4 L940.0 714.0 L946.0 714.0 L947.2 714.4 L947.7 714.8 L948.1 715.2 L948.3 715.6 L948.5 716.0 L948.7 716.5 L948.8 716.9 L948.9 717.3 L948.9 717.7 L949.0 718.1 L949.0 718.5 L949.0 718.9 L949.0 719.3 L949.0 719.7 L949.0 720.1 L949.0 720.5 L949.0 721.0 L949.0 721.4 L949.0 721.8 L949.0 722.2 L949.0 722.6 L949.0 723.0Z" fill="#1a6cf8"/>
<path d="M938.8 723.0 L938.8 722.8 L938.8 722.5 L938.8 722.3 L938.8 722.1 L938.8 721.9 L938.8 721.6 L938.8 721.4 L938.8 721.2 L938.8 721.0 L938.8 720.8 L938.8 720.5 L938.8 720.3 L938.9 720.1 L938.9 719.9 L939.0 719.6 L939.1 719.4 L939.3 719.2 L939.5 719.0 L939.7 718.7 L940.1 718.5 L940.6 718.3 L941.8 718.0 L944.2 718.0 L945.4 718.3 L945.9 718.5 L946.3 718.7 L946.5 719.0 L946.7 719.2 L946.9 719.4 L947.0 719.6 L947.1 719.9 L947.1 720.1 L947.2 720.3 L947.2 720.5 L947.2 720.8 L947.2 721.0 L947.2 721.2 L947.2 721.4 L947.2 721.6 L947.2 721.9 L947.2 722.1 L947.2 722.3 L947.2 722.5 L947.2 722.8 L947.2 723.0Z" fill="url(#gC)"/>
<path d="M903.2 723.0 L904.3 716.2 L905.3 709.4 L906.3 702.5 L907.1 695.7 L908.0 688.9 L908.7 682.1 L909.4 675.3 L910.0 668.5 L910.5 661.6 L911.0 654.8 L911.4 648.0 L911.8 641.2 L912.1 634.4 L912.4 627.5 L912.6 620.7 L912.8 613.9 L913.0 607.1 L913.2 600.3 L913.6 593.5 L914.3 586.6 L915.5 579.8 L919.2 573.0 L923.2 573.0 L926.9 579.8 L928.1 586.6 L928.8 593.5 L929.2 600.3 L929.4 607.1 L929.6 613.9 L929.8 620.7 L930.0 627.5 L930.3 634.4 L930.6 641.2 L931.0 648.0 L931.4 654.8 L931.9 661.6 L932.4 668.5 L933.0 675.3 L933.7 682.1 L934.4 688.9 L935.3 695.7 L936.1 702.5 L937.1 709.4 L938.1 716.2 L939.2 723.0Z" fill="#2a80ff"/>
<path d="M903.8 723.0 L904.8 716.2 L905.9 709.5 L906.8 702.7 L907.7 695.9 L908.5 689.2 L909.2 682.4 L909.9 675.7 L910.5 668.9 L911.1 662.1 L911.6 655.4 L912.0 648.6 L912.4 641.8 L912.7 635.1 L913.0 628.3 L913.2 621.5 L913.4 614.8 L913.5 608.0 L913.7 601.3 L914.1 594.5 L914.9 587.7 L916.1 581.0 L919.8 574.2 L922.7 574.2 L926.3 581.0 L927.5 587.7 L928.3 594.5 L928.7 601.3 L928.9 608.0 L929.0 614.8 L929.2 621.5 L929.4 628.3 L929.7 635.1 L930.0 641.8 L930.4 648.6 L930.8 655.4 L931.3 662.1 L931.9 668.9 L932.5 675.7 L933.2 682.4 L933.9 689.2 L934.7 695.9 L935.6 702.7 L936.5 709.5 L937.6 716.2 L938.7 723.0Z" fill="#00dcf8"/>
<path d="M904.9 723.0 L906.0 716.4 L907.0 709.7 L908.0 703.1 L908.8 696.5 L909.7 689.8 L910.4 683.2 L911.1 676.5 L911.7 669.9 L912.2 663.3 L912.7 656.6 L913.1 650.0 L913.5 643.4 L913.8 636.7 L914.1 630.1 L914.3 623.5 L914.5 616.8 L914.7 610.2 L914.9 603.5 L915.3 596.9 L916.0 590.3 L917.2 583.6 L920.9 577.0 L921.5 577.0 L925.2 583.6 L926.4 590.3 L927.1 596.9 L927.5 603.5 L927.7 610.2 L927.9 616.8 L928.1 623.5 L928.3 630.1 L928.6 636.7 L928.9 643.4 L929.3 650.0 L929.7 656.6 L930.2 663.3 L930.7 669.9 L931.3 676.5 L932.0 683.2 L932.7 689.8 L933.6 696.5 L934.4 703.1 L935.4 709.7 L936.4 716.4 L937.5 723.0Z" fill="url(#gG)"/>
<path d="M880.9 723.0 L882.6 718.3 L883.9 713.6 L885.0 709.0 L885.8 704.3 L886.4 699.6 L886.9 694.9 L887.2 690.2 L887.4 685.5 L887.6 680.9 L887.7 676.2 L887.8 671.5 L887.8 666.8 L887.9 662.1 L887.9 657.5 L887.9 652.8 L887.9 648.1 L887.9 643.4 L887.9 638.7 L888.1 634.0 L888.5 629.4 L889.3 624.7 L891.8 620.0 L894.2 620.0 L896.7 624.7 L897.5 629.4 L897.9 634.0 L898.1 638.7 L898.1 643.4 L898.1 648.1 L898.1 652.8 L898.1 657.5 L898.1 662.1 L898.2 666.8 L898.2 671.5 L898.3 676.2 L898.4 680.9 L898.6 685.5 L898.8 690.2 L899.1 694.9 L899.6 699.6 L900.2 704.3 L901.0 709.0 L902.1 713.6 L903.4 718.3 L905.1 723.0Z" fill="#2a80ff"/>
<path d="M881.4 723.0 L883.2 718.4 L884.5 713.7 L885.5 709.1 L886.4 704.5 L887.0 699.9 L887.4 695.2 L887.7 690.6 L888.0 686.0 L888.2 681.4 L888.3 676.7 L888.3 672.1 L888.4 667.5 L888.4 662.8 L888.4 658.2 L888.4 653.6 L888.4 649.0 L888.4 644.3 L888.5 639.7 L888.7 635.1 L889.1 630.5 L889.9 625.8 L892.3 621.2 L893.7 621.2 L896.1 625.8 L896.9 630.5 L897.3 635.1 L897.5 639.7 L897.6 644.3 L897.6 649.0 L897.6 653.6 L897.6 658.2 L897.6 662.8 L897.6 667.5 L897.7 672.1 L897.7 676.7 L897.8 681.4 L898.0 686.0 L898.3 690.6 L898.6 695.2 L899.0 699.9 L899.6 704.5 L900.5 709.1 L901.5 713.7 L902.8 718.4 L904.6 723.0Z" fill="#00dcf8"/>
<path d="M882.6 723.0 L884.3 718.5 L885.6 714.0 L886.7 709.5 L887.5 705.0 L888.1 700.5 L888.6 696.0 L888.9 691.5 L889.1 687.0 L889.3 682.5 L889.4 678.0 L889.5 673.5 L889.5 669.0 L889.6 664.5 L889.6 660.0 L889.6 655.5 L889.6 651.0 L889.6 646.5 L889.6 642.0 L889.8 637.5 L890.2 633.0 L891.0 628.5 L893.0 624.0 L893.0 624.0 L895.0 628.5 L895.8 633.0 L896.2 637.5 L896.4 642.0 L896.4 646.5 L896.4 651.0 L896.4 655.5 L896.4 660.0 L896.4 664.5 L896.5 669.0 L896.5 673.5 L896.6 678.0 L896.7 682.5 L896.9 687.0 L897.1 691.5 L897.4 696.0 L897.9 700.5 L898.5 705.0 L899.3 709.5 L900.4 714.0 L901.7 718.5 L903.4 723.0Z" fill="url(#gG)"/>
<path d="M884.5 723.0 L886.2 719.7 L887.5 716.4 L888.6 713.0 L889.4 709.7 L890.0 706.4 L890.5 703.1 L890.8 699.8 L891.0 696.5 L891.2 693.1 L891.3 689.8 L891.4 686.5 L891.4 683.2 L891.5 679.9 L891.5 676.5 L891.5 673.2 L891.5 669.9 L891.5 666.6 L891.5 663.3 L891.7 660.0 L892.1 656.6 L892.9 653.3 L893.0 650.0 L893.0 650.0 L893.1 653.3 L893.9 656.6 L894.3 660.0 L894.5 663.3 L894.5 666.6 L894.5 669.9 L894.5 673.2 L894.5 676.5 L894.5 679.9 L894.6 683.2 L894.6 686.5 L894.7 689.8 L894.8 693.1 L895.0 696.5 L895.2 699.8 L895.5 703.1 L896.0 706.4 L896.6 709.7 L897.4 713.0 L898.5 716.4 L899.8 719.7 L901.5 723.0Z" fill="url(#gY2)"/>
<path d="M958.0 723.0 L958.1 722.4 L958.3 721.7 L958.4 721.1 L958.5 720.5 L958.7 719.8 L958.8 719.2 L959.0 718.5 L959.1 717.9 L959.2 717.3 L959.4 716.6 L959.5 716.0 L959.6 715.4 L959.8 714.7 L959.9 714.1 L960.1 713.5 L960.2 712.8 L960.4 712.2 L960.6 711.5 L960.7 710.9 L960.9 710.3 L961.2 709.6 L961.5 709.0 L961.5 709.0 L961.8 709.6 L962.1 710.3 L962.3 710.9 L962.4 711.5 L962.6 712.2 L962.8 712.8 L962.9 713.5 L963.1 714.1 L963.2 714.7 L963.4 715.4 L963.5 716.0 L963.6 716.6 L963.8 717.3 L963.9 717.9 L964.0 718.5 L964.2 719.2 L964.3 719.8 L964.5 720.5 L964.6 721.1 L964.7 721.7 L964.9 722.4 L965.0 723.0Z" fill="#2a80ff"/>
<path d="M958.9 723.0 L959.0 722.4 L959.2 721.9 L959.3 721.3 L959.4 720.7 L959.6 720.1 L959.7 719.6 L959.9 719.0 L960.0 718.4 L960.1 717.8 L960.3 717.3 L960.4 716.7 L960.5 716.1 L960.7 715.6 L960.8 715.0 L961.0 714.4 L961.1 713.8 L961.3 713.3 L961.5 712.7 L961.5 712.1 L961.5 711.5 L961.5 711.0 L961.5 710.4 L961.5 710.4 L961.5 711.0 L961.5 711.5 L961.5 712.1 L961.5 712.7 L961.7 713.3 L961.9 713.8 L962.0 714.4 L962.2 715.0 L962.3 715.6 L962.5 716.1 L962.6 716.7 L962.7 717.3 L962.9 717.8 L963.0 718.4 L963.1 719.0 L963.3 719.6 L963.4 720.1 L963.6 720.7 L963.7 721.3 L963.8 721.9 L964.0 722.4 L964.1 723.0Z" fill="url(#gC)"/>
<path d="M965.4 723.0 L965.6 722.2 L965.7 721.4 L965.9 720.5 L966.0 719.7 L966.2 718.9 L966.3 718.1 L966.5 717.3 L966.6 716.5 L966.8 715.6 L966.9 714.8 L967.1 714.0 L967.3 713.2 L967.4 712.4 L967.6 711.5 L967.8 710.7 L967.9 709.9 L968.1 709.1 L968.3 708.3 L968.5 707.5 L968.7 706.6 L969.0 705.8 L969.4 705.0 L969.4 705.0 L969.8 705.8 L970.1 706.6 L970.3 707.5 L970.5 708.3 L970.7 709.1 L970.9 709.9 L971.0 710.7 L971.2 711.5 L971.4 712.4 L971.5 713.2 L971.7 714.0 L971.9 714.8 L972.0 715.6 L972.2 716.5 L972.3 717.3 L972.5 718.1 L972.6 718.9 L972.8 719.7 L972.9 720.5 L973.1 721.4 L973.2 722.2 L973.4 723.0Z" fill="#2a80ff"/>
<path d="M965.9 723.0 L966.1 722.2 L966.3 721.4 L966.4 720.6 L966.6 719.9 L966.7 719.1 L966.9 718.3 L967.0 717.5 L967.2 716.7 L967.3 715.9 L967.5 715.1 L967.6 714.4 L967.8 713.6 L968.0 712.8 L968.1 712.0 L968.3 711.2 L968.5 710.4 L968.7 709.6 L968.9 708.9 L969.1 708.1 L969.3 707.3 L969.4 706.5 L969.4 705.7 L969.4 705.7 L969.4 706.5 L969.5 707.3 L969.7 708.1 L969.9 708.9 L970.1 709.6 L970.3 710.4 L970.5 711.2 L970.7 712.0 L970.8 712.8 L971.0 713.6 L971.1 714.4 L971.3 715.1 L971.5 715.9 L971.6 716.7 L971.8 717.5 L971.9 718.3 L972.1 719.1 L972.2 719.9 L972.4 720.6 L972.5 721.4 L972.7 722.2 L972.9 723.0Z" fill="#00dcf8"/>
<path d="M967.1 723.0 L967.3 722.3 L967.4 721.5 L967.6 720.8 L967.7 720.0 L967.9 719.3 L968.0 718.5 L968.2 717.8 L968.3 717.0 L968.5 716.3 L968.6 715.6 L968.8 714.8 L969.0 714.1 L969.1 713.3 L969.3 712.6 L969.4 711.8 L969.4 711.1 L969.4 710.3 L969.4 709.6 L969.4 708.9 L969.4 708.1 L969.4 707.4 L969.4 706.6 L969.4 706.6 L969.4 707.4 L969.4 708.1 L969.4 708.9 L969.4 709.6 L969.4 710.3 L969.4 711.1 L969.4 711.8 L969.5 712.6 L969.7 713.3 L969.8 714.1 L970.0 714.8 L970.2 715.6 L970.3 716.3 L970.5 717.0 L970.6 717.8 L970.8 718.5 L970.9 719.3 L971.1 720.0 L971.2 720.8 L971.4 721.5 L971.5 722.3 L971.7 723.0Z" fill="url(#gG)"/>
<path d="M999.5 723.0 L999.5 721.7 L999.5 720.5 L999.5 719.2 L999.5 717.9 L999.5 716.6 L999.5 715.4 L999.5 714.1 L999.5 712.8 L999.5 711.5 L999.5 710.3 L999.5 709.0 L999.5 707.7 L999.5 706.5 L999.5 705.2 L999.5 703.9 L999.5 702.6 L999.5 701.4 L999.6 700.1 L999.7 698.8 L999.9 697.5 L1000.3 696.3 L1001.3 695.0 L1023.3 695.0 L1024.3 696.3 L1024.7 697.5 L1024.9 698.8 L1025.0 700.1 L1025.1 701.4 L1025.1 702.6 L1025.1 703.9 L1025.1 705.2 L1025.1 706.5 L1025.1 707.7 L1025.1 709.0 L1025.1 710.3 L1025.1 711.5 L1025.1 712.8 L1025.1 714.1 L1025.1 715.4 L1025.1 716.6 L1025.1 717.9 L1025.1 719.2 L1025.1 720.5 L1025.1 721.7 L1025.1 723.0Z" fill="#2a80ff"/>
<path d="M1000.2 723.0 L1000.2 721.8 L1000.2 720.6 L1000.2 719.3 L1000.2 718.1 L1000.2 716.9 L1000.2 715.7 L1000.2 714.5 L1000.2 713.3 L1000.2 712.0 L1000.2 710.8 L1000.2 709.6 L1000.2 708.4 L1000.2 707.2 L1000.2 705.9 L1000.2 704.7 L1000.2 703.5 L1000.2 702.3 L1000.3 701.1 L1000.4 699.9 L1000.6 698.6 L1001.0 697.4 L1002.0 696.2 L1022.6 696.2 L1023.6 697.4 L1024.0 698.6 L1024.2 699.9 L1024.3 701.1 L1024.4 702.3 L1024.4 703.5 L1024.4 704.7 L1024.4 705.9 L1024.4 707.2 L1024.4 708.4 L1024.4 709.6 L1024.4 710.8 L1024.4 712.0 L1024.4 713.3 L1024.4 714.5 L1024.4 715.7 L1024.4 716.9 L1024.4 718.1 L1024.4 719.3 L1024.4 720.6 L1024.4 721.8 L1024.4 723.0Z" fill="#00dcf8"/>
<path d="M1001.0 723.0 L1001.0 722.0 L1001.0 720.9 L1001.0 719.9 L1001.0 718.8 L1001.0 717.8 L1001.0 716.7 L1001.0 715.7 L1001.0 714.6 L1001.0 713.6 L1001.0 712.5 L1001.0 711.5 L1001.0 710.5 L1001.0 709.4 L1001.0 708.4 L1001.0 707.3 L1001.0 706.3 L1001.0 705.2 L1001.1 704.2 L1001.2 703.1 L1001.4 702.1 L1001.8 701.0 L1002.8 700.0 L1021.8 700.0 L1022.8 701.0 L1023.2 702.1 L1023.4 703.1 L1023.5 704.2 L1023.6 705.2 L1023.6 706.3 L1023.6 707.3 L1023.6 708.4 L1023.6 709.4 L1023.6 710.5 L1023.6 711.5 L1023.6 712.5 L1023.6 713.6 L1023.6 714.6 L1023.6 715.7 L1023.6 716.7 L1023.6 717.8 L1023.6 718.8 L1023.6 719.9 L1023.6 720.9 L1023.6 722.0 L1023.6 723.0Z" fill="url(#gP)"/>
<path d="M1153.0 723.0 L1153.0 721.7 L1153.0 720.5 L1153.0 719.2 L1153.0 717.9 L1153.0 716.6 L1153.0 715.4 L1153.0 714.1 L1153.0 712.8 L1153.0 711.5 L1153.0 710.3 L1153.0 709.0 L1153.0 707.7 L1153.0 706.5 L1153.0 705.2 L1153.1 703.9 L1153.1 702.6 L1153.2 701.4 L1153.4 700.1 L1153.6 698.8 L1153.9 697.5 L1154.3 696.3 L1155.5 695.0 L1161.5 695.0 L1162.7 696.3 L1163.1 697.5 L1163.4 698.8 L1163.6 700.1 L1163.8 701.4 L1163.9 702.6 L1163.9 703.9 L1164.0 705.2 L1164.0 706.5 L1164.0 707.7 L1164.0 709.0 L1164.0 710.3 L1164.0 711.5 L1164.0 712.8 L1164.0 714.1 L1164.0 715.4 L1164.0 716.6 L1164.0 717.9 L1164.0 719.2 L1164.0 720.5 L1164.0 721.7 L1164.0 723.0Z" fill="#2a80ff"/>
<path d="M1153.5 723.0 L1153.5 721.8 L1153.5 720.6 L1153.5 719.3 L1153.5 718.1 L1153.5 716.9 L1153.5 715.7 L1153.5 714.4 L1153.5 713.2 L1153.5 712.0 L1153.5 710.8 L1153.5 709.6 L1153.5 708.3 L1153.5 707.1 L1153.6 705.9 L1153.6 704.7 L1153.7 703.5 L1153.8 702.2 L1154.0 701.0 L1154.2 699.8 L1154.5 698.6 L1154.9 697.3 L1156.0 696.1 L1161.0 696.1 L1162.1 697.3 L1162.5 698.6 L1162.8 699.8 L1163.0 701.0 L1163.2 702.2 L1163.3 703.5 L1163.4 704.7 L1163.4 705.9 L1163.5 707.1 L1163.5 708.3 L1163.5 709.6 L1163.5 710.8 L1163.5 712.0 L1163.5 713.2 L1163.5 714.4 L1163.5 715.7 L1163.5 716.9 L1163.5 718.1 L1163.5 719.3 L1163.5 720.6 L1163.5 721.8 L1163.5 723.0Z" fill="#00dcf8"/>
<path d="M1154.7 723.0 L1154.7 721.8 L1154.7 720.7 L1154.7 719.5 L1154.7 718.4 L1154.7 717.2 L1154.7 716.1 L1154.7 714.9 L1154.7 713.7 L1154.7 712.6 L1154.7 711.4 L1154.7 710.3 L1154.7 709.1 L1154.7 707.9 L1154.7 706.8 L1154.8 705.6 L1154.8 704.5 L1154.9 703.3 L1155.1 702.2 L1155.3 701.0 L1155.6 699.8 L1156.0 698.7 L1157.2 697.5 L1159.8 697.5 L1161.0 698.7 L1161.4 699.8 L1161.7 701.0 L1161.9 702.2 L1162.1 703.3 L1162.2 704.5 L1162.2 705.6 L1162.3 706.8 L1162.3 707.9 L1162.3 709.1 L1162.3 710.3 L1162.3 711.4 L1162.3 712.6 L1162.3 713.7 L1162.3 714.9 L1162.3 716.1 L1162.3 717.2 L1162.3 718.4 L1162.3 719.5 L1162.3 720.7 L1162.3 721.8 L1162.3 723.0Z" fill="url(#gG)"/>
</g></g>
<rect x="401" y="722.500" width="762" height="2.500" fill="#ffe600"/><rect x="401" y="725" width="762" height="3" fill="#ffb400"/>
<rect x="587.5" y="723.500" width="14" height="4.500" fill="#ff9a00" opacity=".8"/>
<rect x="623.0" y="723.500" width="8" height="4.500" fill="#ff9a00" opacity=".8"/>
<rect x="782.0" y="723.500" width="8" height="4.500" fill="#ff9a00" opacity=".8"/>
<rect x="807.0" y="723.500" width="10" height="4.500" fill="#ff9a00" opacity=".8"/>
<rect x="887.0" y="723.500" width="12" height="4.500" fill="#ff9a00" opacity=".8"/>
<rect x="913.0" y="723.500" width="16" height="4.500" fill="#ff9a00" opacity=".8"/>
<rect x="1000.0" y="723.500" width="24" height="4.500" fill="#ff9a00" opacity=".8"/>
<text x="396" y="530.3" font-size="12" text-anchor="end" fill="#4a4a4a">-30</text>
<text x="396" y="560.1" font-size="12" text-anchor="end" fill="#4a4a4a">-40</text>
<text x="396" y="590.0" font-size="12" text-anchor="end" fill="#4a4a4a">-50</text>
<text x="396" y="619.8" font-size="12" text-anchor="end" fill="#4a4a4a">-60</text>
<text x="396" y="649.6" font-size="12" text-anchor="end" fill="#4a4a4a">-70</text>
<text x="396" y="679.6" font-size="12" text-anchor="end" fill="#4a4a4a">-80</text>
<text x="396" y="709.4" font-size="12" text-anchor="end" fill="#4a4a4a">-90</text>
<text transform="translate(360.500 640) rotate(-90)" font-size="12.500" text-anchor="middle" fill="#4a4a4a">dBm</text>
<g stroke="#c8ccc2" fill="none"><path d="M490.100 548.700A6.100 6.100 0 1 1 492.500 555.300" stroke-width="2.200"/><path d="M500.800 555.200l5.400 5.400" stroke-width="3.200" stroke-linecap="round"/></g><path d="M486.400 545.600l6.200 1.200-4.400 5.600z" fill="#c8ccc2"/>
<defs><linearGradient id="cb" gradientUnits="userSpaceOnUse" x1="0" y1="526" x2="0" y2="728"><stop offset="0" stop-color="#1c1ccc"/><stop offset=".03" stop-color="#0000f8"/><stop offset=".095" stop-color="#0008ff"/><stop offset=".11" stop-color="#0060f8"/><stop offset=".2" stop-color="#00b0f0"/><stop offset=".28" stop-color="#00e0d8"/><stop offset=".36" stop-color="#00e8a0"/><stop offset=".44" stop-color="#00e850"/><stop offset=".52" stop-color="#10e000"/><stop offset=".6" stop-color="#58e400"/><stop offset=".68" stop-color="#a8ec00"/><stop offset=".745" stop-color="#e8f000"/><stop offset=".78" stop-color="#ffd400"/><stop offset=".84" stop-color="#ff9000"/><stop offset=".9" stop-color="#ff5a00"/><stop offset=".945" stop-color="#ff3000"/><stop offset=".96" stop-color="#ff1800"/><stop offset="1" stop-color="#ff1000"/></linearGradient></defs>
<rect x="1198" y="526" width="30" height="202" fill="url(#cb)"/>
<rect x="1198" y="546.7" width="30" height="1" fill="#fff" opacity=".55"/>
<rect x="1198" y="568.2" width="30" height="1" fill="#fff" opacity=".55"/>
<rect x="1198" y="589.7" width="30" height="1" fill="#fff" opacity=".55"/>
<rect x="1198" y="611.2" width="30" height="1" fill="#fff" opacity=".55"/>
<rect x="1198" y="632.7" width="30" height="1" fill="#fff" opacity=".55"/>
<rect x="1198" y="654.2" width="30" height="1" fill="#fff" opacity=".55"/>
<rect x="1198" y="675.7" width="30" height="1" fill="#fff" opacity=".55"/>
<rect x="1198" y="697.2" width="30" height="1" fill="#fff" opacity=".55"/>
<rect x="1198" y="718.7" width="30" height="1" fill="#fff" opacity=".55"/>
<text x="1213" y="586" font-size="12" text-anchor="middle" fill="#1a5a5a">0.1%</text><text x="1213" y="629" font-size="12" text-anchor="middle" fill="#0a5a10">1%</text><text x="1213" y="693" font-size="12" text-anchor="middle" fill="#3a3000">10%</text><text x="1213" y="735.600" font-size="12" text-anchor="middle" fill="#3a0000">100%</text>
</svg>
<!-- SCROLLBAR -->
<div class="abs" style="left:1349px;top:85px;width:15px;height:643px;background:#f5f8f0"></div>
<div class="abs" style="left:1344px;top:704px;width:20px;height:24px;background:#eefafa"></div>
<div class="abs" style="left:1349px;top:388px;width:15px;height:259px;background:#cbcdc4"></div>
<svg class="abs" style="left:1351px;top:88px" width="12" height="8" viewBox="0 0 12 8"><path d="M1.500 6.500L6 2l4.500 4.500" stroke="#4a4a4a" stroke-width="1.600" fill="none"/></svg>
<svg class="abs" style="left:1351px;top:714px" width="12" height="8" viewBox="0 0 12 8"><path d="M1.500 1.500L6 6l4.500-4.500" stroke="#4a4a4a" stroke-width="1.600" fill="none"/></svg>
<div class="abs" style="left:1364px;top:0;width:2px;height:64px;background:#f00"></div>
<div class="abs" style="left:1364px;top:64px;width:2px;height:640px;background:#00f"></div>
<div class="abs" style="left:1364px;top:704px;width:2px;height:64px;background:#f00"></div>
<!-- TASKBAR -->
<div id="task"></div>
<div class="abs" style="left:0;top:729px;width:1366px;height:1px;background:#c9d2ee"></div>
<div class="abs" style="left:0;top:730px;width:100px;height:38px;background:linear-gradient(to right,#858fb2 0,#858fb2 60px,#8c97bc 60px,#8c97bc 67px,#949fc6 67px,#949fc6 74px,#9ba7d0 74px,#9ba7d0 80px,#a5b2dc 80px,#a5b2dc 95px,#afbee6 95px)"></div>
<div class="abs" style="left:1143px;top:730px;width:201px;height:38px;background:linear-gradient(to right,#a7b5de 0,#a7b5de 9px,#9eabd4 9px,#9eabd4 16px,#97a3cb 16px,#97a3cb 22px,#909cc2 22px,#909cc2 28px,#8a95ba 28px,#8a95ba 35px,#858fb2 35px)"></div>
<div class="abs" style="left:1344px;top:729px;width:8px;height:39px;background:#b2948c"></div>
<div class="abs" style="left:1352px;top:729px;width:12px;height:39px;background:linear-gradient(to bottom,#a38a86 0,#7f6664 50%,#6f5a5a 100%);border-left:1px solid #d8c4bc;border-top:1px solid #c8b0a8"></div>
<!-- start orb -->
<svg class="abs" style="left:7px;top:728px" width="40" height="40" viewBox="0 0 40 40"><defs><radialGradient id="orb" cx="50%" cy="88%" r="75%"><stop offset="0" stop-color="#2fd6ff"/><stop offset=".35" stop-color="#1696d8"/><stop offset=".7" stop-color="#0f5c9c"/><stop offset="1" stop-color="#2a5a82"/></radialGradient><linearGradient id="orbh" x1="0" y1="0" x2="0" y2="1"><stop offset="0" stop-color="#e8f4fa" stop-opacity=".9"/><stop offset="1" stop-color="#9cc8e0" stop-opacity=".25"/></linearGradient></defs><circle cx="20" cy="20.300" r="18" fill="url(#orb)" stroke="#1d4f74" stroke-width="1"/><path d="M3.200 17.500A17 17 0 0 1 36.800 17.500C28 13.500 12 13.500 3.200 17.500z" fill="url(#orbh)"/><g transform="translate(20 19.500) scale(1.220) translate(-20 -19)"><path d="M12.500 9.800c2.600-1.400 5-1.200 7.600.2l-1.600 7.600c-2.400-1.300-4.800-1.500-7.600-.2z" fill="#f0602a"/><path d="M21.800 10.700c2.500 1.300 5 1.500 7.700.1l-1.700 7.600c-2.600 1.400-5.100 1.200-7.600-.1z" fill="#8cc63e"/><path d="M10.400 19.300c2.700-1.400 5.100-1.100 7.600.2l-1.700 7.700c-2.400-1.400-4.900-1.600-7.600-.2z" fill="#2a9de0"/><path d="M19.700 20.300c2.500 1.300 5 1.400 7.600.1l-1.700 7.700c-2.600 1.300-5.100 1.200-7.600-.2z" fill="#fcc12c"/></g></svg>
<!-- IE -->
<svg class="abs" style="left:70px;top:730px" width="40" height="36" viewBox="0 0 40 36"><defs><linearGradient id="ieg" x1="0" y1="0" x2="0" y2="1"><stop offset="0" stop-color="#0b4a9c"/><stop offset=".5" stop-color="#1b86d8"/><stop offset="1" stop-color="#35c4f4"/></linearGradient></defs><path d="M33 19.300H14.600c.3 3.200 2.600 5.200 5.800 5.200 2.300 0 4-.9 5-2.600h6.800c-1.800 5.200-6.200 8.500-11.900 8.500-7.400 0-12.600-5.300-12.600-12.500S13 5.300 20.200 5.300c7.600 0 12.900 5.400 12.900 12.800 0 .4 0 .8-.1 1.200zM14.700 15h11.400c-.5-2.900-2.700-4.600-5.700-4.600S15.300 12.100 14.700 15z" fill="url(#ieg)" stroke="#0a3a7c" stroke-width=".6"/><path d="M5.500 31.500C.5 27 7 12.500 19 6.500 27.500 2 34.500 2.500 35.500 6.500c.3 1.300 0 2.800-.8 4.500" fill="none" stroke="#f2b51c" stroke-width="2.200" stroke-linecap="round"/><path d="M5.500 31.500c1.400 1.300 4 1.400 7 .5" fill="none" stroke="#f2b51c" stroke-width="2" stroke-linecap="round"/></svg>
<!-- Explorer -->
<div class="abs" style="left:177px;top:730px;width:4px;height:37px;border:1px solid #6b7499;border-left:none;border-radius:0 3px 3px 0;background:#b9c6ea"></div>
<div class="tbtn" style="left:122px;width:54px"></div>
<svg class="abs" style="left:131px;top:733px" width="36" height="32" viewBox="0 0 36 32"><defs><linearGradient id="fol" x1="0" y1="0" x2="0" y2="1"><stop offset="0" stop-color="#fdf0b4"/><stop offset="1" stop-color="#f2d16a"/></linearGradient><linearGradient id="fst" x1="0" y1="0" x2="0" y2="1"><stop offset="0" stop-color="#d8f0fa"/><stop offset="1" stop-color="#6ec0e6"/></linearGradient></defs><path d="M2 4.500h11l2 2h16.500a1 1 0 0 1 1 1V27H2z" fill="#e9c764"/><rect x="5" y="3.200" width="5" height="2.600" fill="#2aa33a"/><rect x="13.500" y="5.200" width="5" height="2.600" fill="#d8362a"/><rect x="23" y="7.200" width="5.500" height="2.600" fill="#2a86d8"/><path d="M2 9.500h31.500V28a1 1 0 0 1-1 1H3a1 1 0 0 1-1-1z" fill="url(#fol)" stroke="#d9b650" stroke-width=".6"/><path d="M6.500 19.500h22.500l1.500 11h-5.500l-.8-5.500H11.300l-.8 5.500H5z" fill="url(#fst)" stroke="#4aa2d2" stroke-width=".8"/></svg>
<!-- winbox -->
<svg class="abs" style="left:197px;top:732px" width="32" height="32" viewBox="0 0 32 32"><circle cx="16" cy="16" r="15.200" fill="#1d5cc0" stroke="#164a9c" stroke-width=".8"/><path d="M7.500 7.500C8 15.500 14 22.500 23 24.500" stroke="#fff" stroke-width="2" fill="none" stroke-linecap="round"/><path d="M12.500 5.500C13 12.500 18 18.500 26 20" stroke="#fff" stroke-width="2" fill="none" stroke-linecap="round"/></svg>
<svg class="abs" style="left:259px;top:732px" width="32" height="32" viewBox="0 0 32 32"><rect width="32" height="32" fill="#ef443b"/><path d="M12.200 9.200L19 16l-6.800 6.800L5.400 16z" fill="#fff"/><path d="M19.200 9.200L26 16l-6.800 6.800-1.800-1.800 5-5-5-5z" fill="#fff"/></svg><svg class="abs" style="left:320px;top:731px" width="34" height="34" viewBox="-17 -17 34 34"><circle r="16" fill="#e33b2e"/><path d="M0 0L-13.860 -8A16 16 0 0 0 -2.800 15.750L6.100 3.500z" fill="#2da94f"/><path d="M0 0L6.930 -4H16A16 16 0 0 1 -2.800 15.750z" fill="#fbc116"/><path d="M-13.860 -8A16 16 0 0 1 15.500 -4H0z" fill="#e33b2e"/><path d="M0 -7.500H15.300A16 16 0 0 1 -2.900 15.750L6.500 3.750z" fill="#fbc116"/><path d="M-6.500 3.750L-13.860 -8A16 16 0 0 0 -2.900 15.750L6.500 3.750z" fill="#2da94f"/><circle r="7.500" fill="#fff"/><circle r="5.900" fill="#3b7ded"/></svg>
<!-- remote desktop -->
<svg class="abs" style="left:383px;top:731px" width="34" height="34" viewBox="0 0 34 34"><defs><linearGradient id="rds" x1="0" y1="0" x2="1" y2="1"><stop offset="0" stop-color="#0a18b8"/><stop offset=".5" stop-color="#1d4ae0"/><stop offset="1" stop-color="#7fb0f4"/></linearGradient></defs><path d="M8 2l22 2.500-2.500 19L6.500 20z" fill="#c9cdd2" stroke="#9aa0a8" stroke-width=".8"/><path d="M10 4.200l18 2-2 15L8.700 18.300z" fill="url(#rds)"/><path d="M14 22h9l1 5h-11z" fill="#d4d7d8"/><ellipse cx="18.500" cy="29" rx="9.500" ry="3.800" fill="#dcdedc" stroke="#aeb2b0" stroke-width=".7"/><rect x="1" y="9" width="21" height="10" rx="1.500" fill="#4aa6e8" stroke="#2a86d0" stroke-width=".8"/><g fill="#fff"><rect x="3" y="10.800" width="2" height="1.600"/><rect x="6" y="10.800" width="2" height="1.600"/><rect x="9" y="10.800" width="2" height="1.600"/><rect x="12" y="10.800" width="2" height="1.600"/><rect x="15" y="10.800" width="2" height="1.600"/><rect x="18" y="10.800" width="2" height="1.600"/><rect x="3" y="13.300" width="2" height="1.600"/><rect x="6" y="13.300" width="2" height="1.600"/><rect x="9" y="13.300" width="2" height="1.600"/><rect x="12" y="13.300" width="2" height="1.600"/><rect x="15" y="13.300" width="2" height="1.600"/><rect x="18" y="13.300" width="2" height="1.600"/><rect x="5" y="15.800" width="13" height="1.600"/></g></svg>
<svg class="abs" style="left:444px;top:731px" width="34" height="34" viewBox="-17 -17 34 34"><circle r="16" fill="#e33b2e"/><path d="M0 0L-13.860 -8A16 16 0 0 0 -2.800 15.750L6.100 3.500z" fill="#2da94f"/><path d="M0 0L6.930 -4H16A16 16 0 0 1 -2.800 15.750z" fill="#fbc116"/><path d="M-13.860 -8A16 16 0 0 1 15.500 -4H0z" fill="#e33b2e"/><path d="M0 -7.500H15.300A16 16 0 0 1 -2.900 15.750L6.500 3.750z" fill="#fbc116"/><path d="M-6.500 3.750L-13.860 -8A16 16 0 0 0 -2.900 15.750L6.500 3.750z" fill="#2da94f"/><circle r="7.500" fill="#fff"/><circle r="5.900" fill="#3b7ded"/></svg>
<!-- firefox btn -->
<div class="tbtn" style="left:493px"></div>
<svg class="abs" style="left:506px;top:731px" width="34" height="35" viewBox="0 0 34 35"><defs><radialGradient id="fxo" cx="70%" cy="15%" r="95%"><stop offset="0" stop-color="#fff36a"/><stop offset=".3" stop-color="#ffbd2e"/><stop offset=".6" stop-color="#ff7a1a"/><stop offset=".85" stop-color="#f2344a"/><stop offset="1" stop-color="#d61a8a"/></radialGradient><radialGradient id="fxp" cx="50%" cy="40%" r="60%"><stop offset="0" stop-color="#9a5cf0"/><stop offset="1" stop-color="#5a2ac8"/></radialGradient></defs><path d="M17 33.500C8 33.500 1.500 27 1.500 18.500c0-4.500 1.800-8 4.200-10.300-.1 1.500.3 2.600 1 3.400C8 8.500 10.500 6.700 13 6c-.6 1-.7 2-.4 2.900 1.700-.4 3.600-.3 5.200.3C17.400 6 19 2.500 21.500.8c-.2 3 1.400 5 3.500 7 3.800 3.200 7.500 6.300 7.500 12.200 0 7.700-6.500 13.500-15.500 13.500z" fill="url(#fxo)"/><circle cx="16.500" cy="19.500" r="7.600" fill="url(#fxp)"/><path d="M8 15.500c2-2.600 5-3.300 7.700-2.300 1.300.5 2.300 1.300 3.500 1.400-1 1.300-2.700 1.800-4.400 1.500 1 1.700 3.200 2.500 5.400 1.800-1 2.600-4 3.900-6.800 3.200C10.500 20.400 8.400 18.200 8 15.500z" fill="#ff9a24"/></svg>
<!-- anydesk active btn -->
<div class="abs" style="left:610px;top:730px;width:4px;height:37px;border:1px solid #6b7499;border-left:none;border-radius:0 3px 3px 0;background:#b9c6ea"></div>
<div class="tbtn" style="left:555px;width:55px;border-color:#3c7a4a;background:linear-gradient(to right,#3f8a52 0,#49b04e 30%,#3fd23c 70%,#38dc34 100%)"></div>
<svg class="abs" style="left:566px;top:732px" width="32" height="32" viewBox="0 0 32 32"><rect width="32" height="32" fill="#ef443b"/><path d="M12.200 9.200L19 16l-6.800 6.800L5.400 16z" fill="#fff"/><path d="M19.200 9.200L26 16l-6.800 6.800-1.800-1.800 5-5-5-5z" fill="#fff"/></svg>
<!-- notepad -->
<div class="tbtn" style="left:617px"></div>
<svg class="abs" style="left:630px;top:732px" width="34" height="34" viewBox="0 0 34 34"><defs><linearGradient id="npg" x1="0" y1="0" x2="1" y2="1"><stop offset="0" stop-color="#bfe6f4"/><stop offset=".6" stop-color="#6fb6d6"/><stop offset="1" stop-color="#4a98c0"/></linearGradient></defs><path d="M26 5l4.500 1.500-2.500 25-5-1.500z" fill="#e8e4d8" stroke="#b8b4a8" stroke-width=".5"/><path d="M11 3.500L27.500 5 23.500 30.500 2.500 25.500z" fill="url(#npg)" stroke="#5a9ab8" stroke-width=".6"/><path d="M12 2.500l15 1.400" stroke="#6a7078" stroke-width="1.800" stroke-dasharray="1.200 1.100"/></svg>
<!-- control panel -->
<div class="tbtn" style="left:679px"></div>
<svg class="abs" style="left:692px;top:734px" width="34" height="31" viewBox="0 0 34 31"><rect x="1" y="1" width="32" height="21" rx="1.500" fill="#3b8fd6" stroke="#2a6cb0" stroke-width="1"/><circle cx="10" cy="10.500" r="5.800" fill="none" stroke="#e8f4fc" stroke-width="1.800"/><path d="M10 10.500V3.500a7 7 0 0 1 7 7z" fill="#f6a21c"/><rect x="19.500" y="6" width="10" height="3.600" fill="#2a6cb0" stroke="#d8ecfa" stroke-width="1"/><rect x="19.500" y="13" width="10" height="3.600" fill="#2a6cb0" stroke="#d8ecfa" stroke-width="1"/><rect x="5.500" y="17.300" width="2.200" height="2.200" fill="#7fe0f4"/><rect x="9.500" y="17.300" width="2.200" height="2.200" fill="#f6a21c"/><path d="M11.500 29c0-4 2.800-6.500 5.800-6.500s5.800 2.500 5.800 6.500c-3 1.600-8.600 1.600-11.600 0z" fill="#d9dad6" stroke="#a8aaa6" stroke-width=".6"/></svg>
<!-- sync -->
<div class="tbtn" style="left:741px"></div>
<svg class="abs" style="left:754px;top:732px" width="33" height="33" viewBox="0 0 33 33"><rect x=".5" y=".5" width="32" height="32" rx="5" fill="#fff"/><path d="M26.120 11.600A10.800 10.800 0 0 1 11.600 26.120" stroke="#2a8ef0" stroke-width="5" fill="none"/><path d="M6.880 21.400A10.800 10.800 0 0 1 21.400 6.880" stroke="#2a9af4" stroke-width="5" fill="none"/></svg>
<!-- monitor -->
<div class="tbtn" style="left:803px"></div>
<svg class="abs" style="left:816px;top:732px" width="36" height="34" viewBox="0 0 36 34"><path d="M2.500 8l5-2.500v20l-5 1z" fill="#b8bcb8" stroke="#8a8e8a" stroke-width=".6"/><path d="M8.500 3l22.500 2-2 19.500L9.500 22z" fill="#c9cdc8" stroke="#8a8e8a" stroke-width=".7"/><path d="M10.300 5l18.700 1.800-1.700 16L11 20.500z" fill="#1c2a20"/><path d="M11.500 17l2.500-.2 1-7 1.500 8.500 1.500-5 1.500 3 1.500-8 1.500 9.500 1.500-4.500 1.500 3 1.500-1" stroke="#2fe05a" stroke-width="1.400" fill="none"/><path d="M16 23h8l1 4h-10z" fill="#d4d7d4"/><ellipse cx="20.500" cy="29" rx="8.500" ry="3.400" fill="#dcdedc" stroke="#aeb2b0" stroke-width=".7"/><path d="M3 27.500c4 1.500 9 1 12-.5" stroke="#9a9e9a" stroke-width=".8" fill="none"/></svg>
<!-- tray -->
<div class="abs" style="left:1188px;top:747px;width:0;height:0;border-left:4.500px solid transparent;border-right:4.500px solid transparent;border-bottom:5px solid #fff"></div>
<svg class="abs" style="left:1209px;top:741px" width="16" height="16" viewBox="0 0 18 18"><rect x="1.200" y="2.200" width="8.600" height="14" rx="1.500" fill="#6f7896" stroke="#fff" stroke-width="1.500"/><path d="M9.500 2.500h3M11 1v4M14.500 1v4M9 5h7.500v2.500c0 2-1.500 3.500-3 3.800V16h-1.600v-4.700c-1.500-.3-2.900-1.800-2.900-3.800z" fill="#fff" stroke="#fff" stroke-width=".8"/></svg>
<svg class="abs" style="left:1233px;top:742px" width="16" height="14" viewBox="0 0 18 16"><g fill="#fff"><rect x="1" y="12.500" width="2.600" height="2.500"/><rect x="4.600" y="10" width="2.600" height="5"/><rect x="8.200" y="7" width="2.600" height="8"/><rect x="11.800" y="4" width="2.600" height="11"/><rect x="15.400" y="1" width="2.600" height="14" fill="none" stroke="#fff" stroke-width=".9"/></g></svg>
<svg class="abs" style="left:1257px;top:741px" width="17" height="16" viewBox="0 0 19 18"><path d="M1.500 6.200h2.700L8.800 1.500v15L4.200 11.800H1.500z" fill="#e9edf6" stroke="#fff" stroke-width="1" stroke-linejoin="round"/><path d="M11.200 6.200c1.300 1.600 1.300 4 0 5.600M13.600 4c2.400 2.900 2.400 7.100 0 10M16 2c3.200 4.200 3.200 9.800 0 14" stroke="#fff" stroke-width="1.100" fill="none" stroke-linecap="round"/></svg>
<div class="abs nw" style="left:1280px;width:72px;text-align:center;top:733px;height:16px;line-height:16px;font-size:12px;letter-spacing:-.42px;color:#f3f6fc">4:28 PM</div>
<div class="abs nw" style="left:1280px;width:71px;text-align:center;top:749px;height:16px;line-height:16px;font-size:12px;color:#f3f6fc">1/3/2026</div>
</div>
</body>
</html>
